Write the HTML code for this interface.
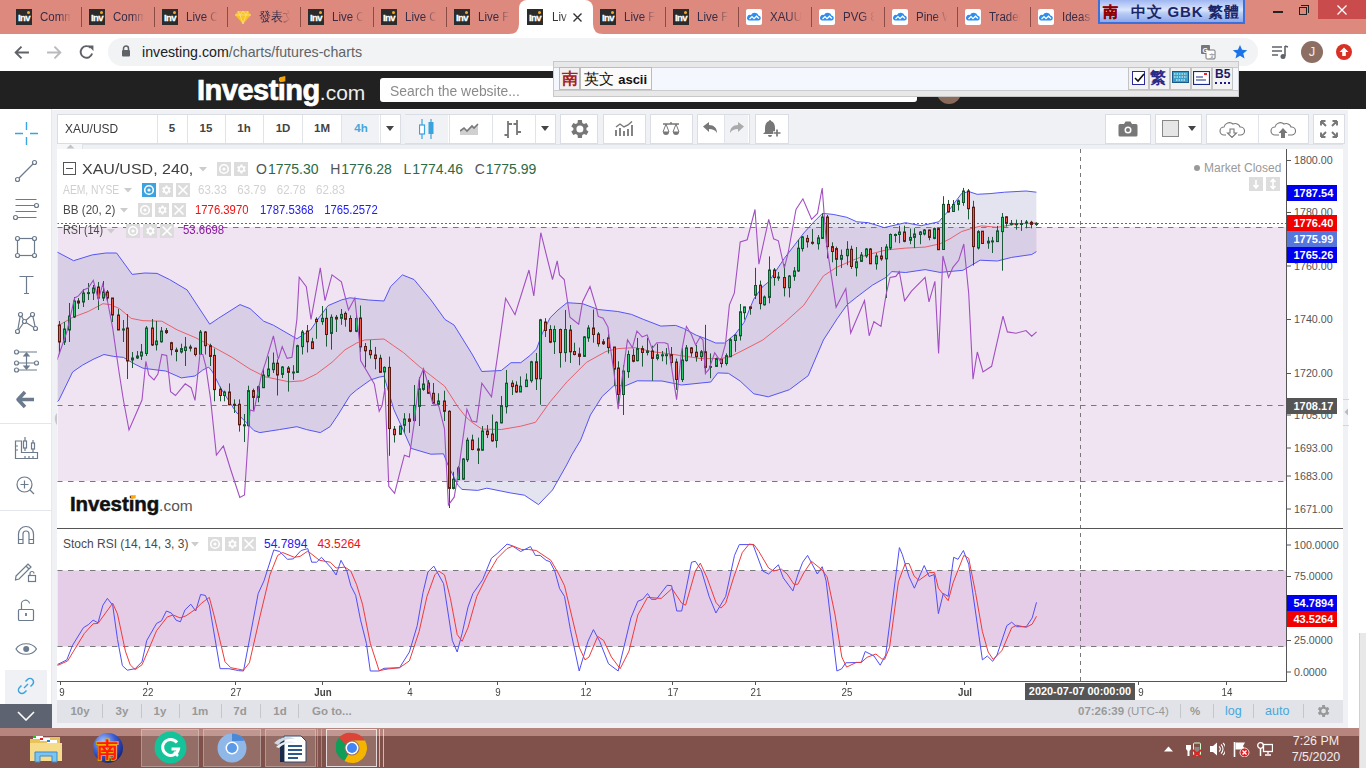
<!DOCTYPE html><html><head><meta charset="utf-8"><style>
*{margin:0;padding:0;box-sizing:border-box}
html,body{width:1366px;height:768px;overflow:hidden;background:#fff;font-family:"Liberation Sans",sans-serif}
.a{position:absolute}
.tabt{position:absolute;top:9px;font-size:12.5px;color:#382c46;white-space:nowrap;overflow:hidden;width:34px;line-height:16px;transform:scaleX(0.92);transform-origin:0 0;
 -webkit-mask-image:linear-gradient(90deg,#000 60%,transparent 100%)}
.fav{position:absolute;top:9px;width:16px;height:16px;background:#2b2b2b;color:#fff;font-weight:bold;font-size:9.5px;line-height:17px;text-align:center;letter-spacing:-0.6px;-webkit-text-stroke:0.3px #fff}
.fav i{position:absolute;right:2px;top:2px;width:3px;height:3px;background:#f5a623;border-radius:2px}
.sep{position:absolute;top:7px;width:1px;height:20px;background:#8a4c44}
.tb{position:absolute;top:114px;height:30px;background:#fff;border:1px solid #dadde3}
.tbd{position:absolute;top:0;width:1px;height:28px;background:#e0e3e8}
.pl{position:absolute;left:1294px;font-size:10.7px;color:#555;line-height:12px}
.tag{position:absolute;left:1287px;width:50px;height:16px;color:#fff;font-weight:bold;font-size:11px;line-height:16px;padding-left:6.5px}
.dl{position:absolute;top:686px;font-size:10.6px;color:#444;line-height:12px;transform:scaleX(0.92)}
.bb{position:absolute;top:704px;font-size:11.5px;color:#999;font-weight:bold;line-height:14px}
.bsep{position:absolute;top:704px;width:1px;height:14px;background:#c4c6cc}
.sb{position:absolute;left:14px;width:24px;height:24px}
</style></head><body><div class="a" style="left:0;top:0;width:1366px;height:34px;background:#dd897d"></div><div class="a" style="left:519px;top:0;width:74px;height:36px;background:#fff;border-radius:8px 8px 0 0"></div><svg class="a" style="left:509px;top:24px" width="94" height="12"><path d="M0 10 Q10 10 10 0 L10 12 L0 12Z M94 10 Q84 10 84 0 L84 12 L94 12Z" fill="#fff"/></svg><div class="fav" style="left:16px">Inv<i></i></div><div class="tabt" style="left:40px">Comm</div><div class="sep" style="left:81px"></div><div class="fav" style="left:89px">Inv<i></i></div><div class="tabt" style="left:113px">Comm</div><div class="sep" style="left:154px"></div><div class="fav" style="left:162px">Inv<i></i></div><div class="tabt" style="left:186px">Live C</div><div class="sep" style="left:227px"></div><svg class="a" style="left:235px;top:9px" width="16" height="16" viewBox="0 0 16 16"><path d="M3 2 L13 2 L16 6 L8 15 L0 6Z" fill="#f7c325"/><path d="M3 2 L5 6 L8 2 L11 6 L13 2 M0 6 L16 6 M5 6 L8 15 L11 6" stroke="#fbe08a" stroke-width="0.8" fill="none"/></svg><div class="tabt" style="left:259px">發表文</div><div class="sep" style="left:300px"></div><div class="fav" style="left:308px">Inv<i></i></div><div class="tabt" style="left:332px">Live C</div><div class="sep" style="left:373px"></div><div class="fav" style="left:381px">Inv<i></i></div><div class="tabt" style="left:405px">Live C</div><div class="sep" style="left:446px"></div><div class="fav" style="left:454px">Inv<i></i></div><div class="tabt" style="left:478px">Live Fu</div><div class="fav" style="left:527px">Inv<i></i></div><div class="tabt" style="left:552px;width:20px;color:#333">Liv</div><svg class="a" style="left:573px;top:13px" width="9" height="9"><path d="M0.5 0.5L8.5 8.5M8.5 0.5L0.5 8.5" stroke="#333" stroke-width="1.4"/></svg><div class="fav" style="left:600px">Inv<i></i></div><div class="tabt" style="left:624px">Live Fu</div><div class="sep" style="left:665px"></div><div class="fav" style="left:673px">Inv<i></i></div><div class="tabt" style="left:697px">Live Fu</div><div class="sep" style="left:738px"></div><svg class="a" style="left:746px;top:9px" width="16" height="16" viewBox="0 0 16 16"><rect width="16" height="16" rx="2" fill="#fff"/><path d="M3 11.5 H13 A2.5 2.5 0 0 0 12.5 6.6 A4 4 0 0 0 5 6 A2.8 2.8 0 0 0 3 11.5Z" fill="#2e8ef0"/><path d="M3.5 10 L6 7.6 L8 9.6 L10.5 7.2 L13 9.4" stroke="#fff" stroke-width="1.3" fill="none"/></svg><div class="tabt" style="left:770px">XAUU</div><div class="sep" style="left:811px"></div><svg class="a" style="left:819px;top:9px" width="16" height="16" viewBox="0 0 16 16"><rect width="16" height="16" rx="2" fill="#fff"/><path d="M3 11.5 H13 A2.5 2.5 0 0 0 12.5 6.6 A4 4 0 0 0 5 6 A2.8 2.8 0 0 0 3 11.5Z" fill="#2e8ef0"/><path d="M3.5 10 L6 7.6 L8 9.6 L10.5 7.2 L13 9.4" stroke="#fff" stroke-width="1.3" fill="none"/></svg><div class="tabt" style="left:843px">PVG 8</div><div class="sep" style="left:884px"></div><svg class="a" style="left:892px;top:9px" width="16" height="16" viewBox="0 0 16 16"><rect width="16" height="16" rx="2" fill="#fff"/><path d="M3 11.5 H13 A2.5 2.5 0 0 0 12.5 6.6 A4 4 0 0 0 5 6 A2.8 2.8 0 0 0 3 11.5Z" fill="#2e8ef0"/><path d="M3.5 10 L6 7.6 L8 9.6 L10.5 7.2 L13 9.4" stroke="#fff" stroke-width="1.3" fill="none"/></svg><div class="tabt" style="left:916px">Pine W</div><div class="sep" style="left:957px"></div><svg class="a" style="left:965px;top:9px" width="16" height="16" viewBox="0 0 16 16"><rect width="16" height="16" rx="2" fill="#fff"/><path d="M3 11.5 H13 A2.5 2.5 0 0 0 12.5 6.6 A4 4 0 0 0 5 6 A2.8 2.8 0 0 0 3 11.5Z" fill="#2e8ef0"/><path d="M3.5 10 L6 7.6 L8 9.6 L10.5 7.2 L13 9.4" stroke="#fff" stroke-width="1.3" fill="none"/></svg><div class="tabt" style="left:989px">Trader</div><div class="sep" style="left:1030px"></div><svg class="a" style="left:1038px;top:9px" width="16" height="16" viewBox="0 0 16 16"><rect width="16" height="16" rx="2" fill="#fff"/><path d="M3 11.5 H13 A2.5 2.5 0 0 0 12.5 6.6 A4 4 0 0 0 5 6 A2.8 2.8 0 0 0 3 11.5Z" fill="#2e8ef0"/><path d="M3.5 10 L6 7.6 L8 9.6 L10.5 7.2 L13 9.4" stroke="#fff" stroke-width="1.3" fill="none"/></svg><div class="tabt" style="left:1062px">Ideas</div><div class="a" style="left:1273px;top:11px;width:10px;height:2px;background:#222"></div><div class="a" style="left:1299px;top:7px;width:8px;height:8px;border:1px solid #222"></div><div class="a" style="left:1301px;top:5px;width:8px;height:8px;border-top:1px solid #222;border-right:1px solid #222"></div><div class="a" style="left:1318px;top:0;width:48px;height:19px;background:#c94b4b"></div><svg class="a" style="left:1337px;top:5px" width="10" height="10"><path d="M0.5 0.5L9.5 9.5M9.5 0.5L0.5 9.5" stroke="#fff" stroke-width="1.3"/></svg><div class="a" style="left:1098px;top:0;width:147px;height:24px;background:linear-gradient(#9fb6f2,#dce6fc 45%,#b9ccf5 60%,#8ea8ec);border:2px solid #3d6fd8;border-top:0"></div><div class="a" style="left:1103px;top:2px;font-size:15px;font-weight:bold;color:#e01010;line-height:20px;-webkit-text-stroke:0.3px #800">南</div><div class="a" style="left:1131px;top:2px;font-size:15px;font-weight:bold;color:#1a2668;line-height:19px;letter-spacing:0.8px;white-space:nowrap">中文 GBK 繁體</div><div class="a" style="left:0;top:34px;width:1366px;height:37px;background:#fff"></div><svg class="a" style="left:13px;top:44px" width="17" height="17" viewBox="0 0 16 16"><path d="M15 8H2.5M8 2.5L2.5 8L8 13.5" stroke="#5f6368" stroke-width="1.8" fill="none"/></svg><svg class="a" style="left:46px;top:44px" width="17" height="17" viewBox="0 0 16 16"><path d="M1 8H13.5M8 2.5L13.5 8L8 13.5" stroke="#b8babd" stroke-width="1.8" fill="none"/></svg><svg class="a" style="left:78px;top:44px" width="17" height="17" viewBox="0 0 16 16"><path d="M13.3 9A5.5 5.5 0 1 1 11.9 3.6" stroke="#5f6368" stroke-width="1.8" fill="none"/><path d="M9.5 1.5H14.5V6.5Z" fill="#5f6368"/></svg><div class="a" style="left:108px;top:38px;width:1150px;height:28px;background:#f1f3f4;border-radius:14px"></div><svg class="a" style="left:121px;top:45px" width="10" height="12" viewBox="0 0 10 12"><path d="M2.5 5V3.5A2.5 2.5 0 0 1 7.5 3.5V5" stroke="#5f6368" stroke-width="1.5" fill="none"/><rect x="1" y="5" width="8" height="6.5" rx="1" fill="#5f6368"/></svg><div class="a" style="left:142px;top:44px;font-size:14.2px;line-height:17px;color:#5f6368;white-space:nowrap"><span style="color:#202124">investing.com</span>/charts/futures-charts</div><svg class="a" style="left:1200px;top:44px" width="16" height="16" viewBox="0 0 16 16"><rect x="1" y="1" width="9" height="9" rx="1" fill="#777"/><rect x="6" y="6" width="9" height="9" rx="1" fill="#fff" stroke="#777"/><text x="2.5" y="8.5" font-size="7" fill="#fff" font-weight="bold" font-family="Liberation Sans">G</text><text x="8.5" y="13.5" font-size="6" fill="#777" font-family="Liberation Sans">文</text></svg><svg class="a" style="left:1232px;top:44px" width="16" height="16" viewBox="0 0 24 24"><path d="M12 1.5l3.1 7.2 7.7.6-5.9 5 1.9 7.6L12 17.8l-6.8 4.1 1.9-7.6-5.9-5 7.7-.6z" fill="#1a73e8"/></svg><svg class="a" style="left:1271px;top:44px" width="18" height="16" viewBox="0 0 18 16"><path d="M1 3H11M1 7H11M1 11H7" stroke="#5f6368" stroke-width="1.6"/><path d="M14 2V12" stroke="#5f6368" stroke-width="1.6"/><circle cx="12" cy="12.5" r="2.5" fill="#5f6368"/><path d="M14 2L17 3" stroke="#5f6368" stroke-width="1.6"/></svg><div class="a" style="left:1301px;top:41px;width:22px;height:22px;border-radius:11px;background:#8d6e63;color:#f5e9e6;font-size:13px;line-height:22px;text-align:center">J</div><svg class="a" style="left:1336px;top:44px" width="16" height="16" viewBox="0 0 16 16"><circle cx="8" cy="8" r="8" fill="#d93025"/><path d="M8 3.5L12.5 8H9.8V12H6.2V8H3.5Z" fill="#fff"/></svg><div class="a" style="left:0;top:71px;width:1366px;height:38px;background:#212121"></div><div class="a" style="left:380px;top:78px;width:537px;height:24px;background:#fff;border-radius:3px"></div><div class="a" style="left:390px;top:82px;font-size:15px;color:#8a8a8a;line-height:17px;transform:scaleX(0.927);transform-origin:0 0;white-space:nowrap">Search the website...</div><div class="a" style="left:937px;top:80px;width:24px;height:24px;border-radius:12px;background:#8a6a5a"></div><div class="a" style="left:197px;top:73px;font-size:29px;font-weight:bold;color:#fff;line-height:34px;letter-spacing:-0.5px;white-space:nowrap;-webkit-text-stroke:0.7px #fff">Investing<span style="font-weight:normal;font-size:21px;letter-spacing:0;-webkit-text-stroke:0;color:#eee">.com</span></div><div class="a" style="left:553px;top:61px;width:686px;height:36px;background:#e8e8e8;border:1px solid #c8c8c8"></div><div class="a" style="left:554px;top:67px;width:684px;height:24px;background:#f4f8fe;border-top:1px solid #ccc;border-bottom:1px solid #ccc"></div><div class="a" style="left:559px;top:67px;width:21px;height:23px;background:#f0f0f0;border:1px solid #bbb;color:#a82020;font-weight:bold;font-size:16px;line-height:21px;text-align:center">南</div><div class="a" style="left:580px;top:67px;width:72px;height:23px;background:#fafafa;border:1px solid #bbb;color:#111;font-size:15px;line-height:21px;padding-left:3px;white-space:nowrap">英文 <b style="font-size:13px">ascii</b></div><div class="a" style="left:1128px;top:67px;width:21px;height:23px;background:#f2f2f2;border:1px solid #c4c4c4"></div><div class="a" style="left:1149px;top:67px;width:21px;height:23px;background:#f2f2f2;border:1px solid #c4c4c4"></div><div class="a" style="left:1170px;top:67px;width:21px;height:23px;background:#f2f2f2;border:1px solid #c4c4c4"></div><div class="a" style="left:1191px;top:67px;width:21px;height:23px;background:#f2f2f2;border:1px solid #c4c4c4"></div><div class="a" style="left:1212px;top:67px;width:21px;height:23px;background:#f2f2f2;border:1px solid #c4c4c4"></div><div class="a" style="left:1132px;top:71px;width:13px;height:14px;border:1px solid #2a2a9a;background:#fff"></div><svg class="a" style="left:1133px;top:72px" width="12" height="12"><path d="M2 6L5 9L11 2" stroke="#111" stroke-width="1.6" fill="none"/></svg><div class="a" style="left:1150px;top:68px;font-size:16px;font-weight:bold;color:#2a2a8a;line-height:20px">繁</div><svg class="a" style="left:1172px;top:71px" width="17" height="12"><rect x="0.5" y="0.5" width="16" height="11" fill="#3aa0c8" stroke="#1a5a8a"/><path d="M2 3H15M2 6H15M4 9H13" stroke="#fff" stroke-width="1" stroke-dasharray="1.5 1"/></svg><svg class="a" style="left:1193px;top:71px" width="17" height="14"><rect x="0.5" y="0.5" width="16" height="13" fill="#fff" stroke="#1a2a8a" stroke-width="1.2"/><rect x="11" y="2" width="3" height="2" fill="#e22"/><path d="M3 6H10M3 9H13" stroke="#1a2a8a" stroke-width="1.2"/></svg><div class="a" style="left:1215px;top:68px;font-size:12px;font-weight:bold;color:#1a1a6a;line-height:13px">B5</div><div class="a" style="left:1215px;top:82px;width:15px;height:3px;border-top:2px dotted #1a1a8a"></div><div class="a" style="left:0;top:109px;width:1366px;height:619px;background:#fff"></div><div class="a" style="left:52px;top:110px;width:1296px;height:618px;background:#eff1f5"></div><div class="tb" style="left:57px;width:344px"><div class="a" style="left:283px;top:0;width:38px;height:28px;background:#f1f2f5"></div><div class="tbd" style="left:99px"></div><div class="tbd" style="left:129px"></div><div class="tbd" style="left:167px"></div><div class="tbd" style="left:205px"></div><div class="tbd" style="left:244px"></div><div class="tbd" style="left:283px"></div><div class="tbd" style="left:322px"></div></div><div class="tb" style="left:405px;width:151px"><div class="a" style="left:-1px;top:0;width:43px;height:28px;background:#f1f2f5"></div><div class="tbd" style="left:43px"></div><div class="tbd" style="left:86px"></div><div class="tbd" style="left:129px"></div></div><div class="tb" style="left:560px;width:38px"></div><div class="tb" style="left:603px;width:43px"></div><div class="tb" style="left:650px;width:43px"></div><div class="tb" style="left:697px;width:53px"><div class="a" style="left:26px;top:0;width:24px;height:28px;background:#f1f2f5"></div><div class="tbd" style="left:26px"></div></div><div class="tb" style="left:755px;width:34px"></div><div class="tb" style="left:1105px;width:46px"></div><div class="tb" style="left:1155px;width:47px"></div><div class="tb" style="left:1206px;width:103px"><div class="tbd" style="left:51px"></div></div><div class="tb" style="left:1313px;width:32px"></div><div class="a" style="left:65px;top:121px;font-size:13px;color:#3a3a3a;line-height:15px;transform:scaleX(0.92);transform-origin:0 0">XAU/USD</div><div class="a" style="left:152px;width:40px;top:121px;text-align:center;font-size:11.5px;font-weight:bold;color:#444;line-height:14px">5</div><div class="a" style="left:186px;width:40px;top:121px;text-align:center;font-size:11.5px;font-weight:bold;color:#444;line-height:14px">15</div><div class="a" style="left:224px;width:40px;top:121px;text-align:center;font-size:11.5px;font-weight:bold;color:#444;line-height:14px">1h</div><div class="a" style="left:263px;width:40px;top:121px;text-align:center;font-size:11.5px;font-weight:bold;color:#444;line-height:14px">1D</div><div class="a" style="left:302px;width:40px;top:121px;text-align:center;font-size:11.5px;font-weight:bold;color:#444;line-height:14px">1M</div><div class="a" style="left:341px;width:40px;top:121px;text-align:center;font-size:11.5px;font-weight:bold;color:#45a7dc;line-height:14px">4h</div><svg class="a" style="left:386px;top:126px" width="8" height="5"><path d="M0 0H8L4 5Z" fill="#444"/></svg><svg class="a" style="left:541px;top:126px" width="8" height="5"><path d="M0 0H8L4 5Z" fill="#444"/></svg><svg class="a" style="left:1188px;top:126px" width="8" height="5"><path d="M0 0H8L4 5Z" fill="#444"/></svg><svg class="a" style="left:419px;top:119px" width="16" height="20"><path d="M3 0V20M12 0V20" stroke="#3aa2dc" stroke-width="1.2"/><rect x="0.5" y="6" width="5" height="9" fill="#fff" stroke="#3aa2dc" stroke-width="1.2"/><rect x="9.5" y="3" width="5" height="12" fill="#3aa2dc"/></svg><svg class="a" style="left:460px;top:123px" width="20" height="12"><path d="M0 12V8L4 5L7 8L12 3L14 5L18 1V12Z" fill="#d0d0d0"/><path d="M0 8L4 5L7 8L12 3L14 5L18 1" stroke="#777" stroke-width="1.6" fill="none"/></svg><svg class="a" style="left:504px;top:119px" width="18" height="20"><path d="M4 2V19M13 1V16M0.5 16H4M4 5H8M9.5 5H13M13 13H17" stroke="#777" stroke-width="1.8" fill="none"/></svg><svg class="a" style="left:567px;top:117px" width="24" height="24" viewBox="0 0 24 24"><path fill="#777" d="M19.4 13a7.5 7.5 0 0 0 0-2l2.1-1.6-2-3.5-2.5 1a7.4 7.4 0 0 0-1.7-1L14.9 3h-4l-.4 2.9a7.4 7.4 0 0 0-1.7 1l-2.5-1-2 3.5L6.4 11a7.5 7.5 0 0 0 0 2l-2.1 1.6 2 3.5 2.5-1a7.4 7.4 0 0 0 1.7 1l.4 2.9h4l.4-2.9a7.4 7.4 0 0 0 1.7-1l2.5 1 2-3.5zM12.9 15.5a3.5 3.5 0 1 1 0-7 3.5 3.5 0 0 1 0 7z"/></svg><svg class="a" style="left:615px;top:121px" width="18" height="16"><path d="M1 15V9M5 15V7M9 15V10M13 15V8M17 15V4" stroke="#777" stroke-width="1.8"/><path d="M1 6L5 3L9 6L13 4L17 0.5" stroke="#777" stroke-width="1.4" fill="none"/></svg><svg class="a" style="left:662px;top:121px" width="18" height="16"><path d="M1 3H17M9 1V3" stroke="#777" stroke-width="1.4"/><path d="M4 3L1 11H7ZM14 3L11 11H17Z" stroke="#777" stroke-width="1" fill="none"/><path d="M1 11A3 3 0 0 0 7 11ZM11 11A3 3 0 0 0 17 11Z" fill="#777"/></svg><svg class="a" style="left:703px;top:122px" width="15" height="12" viewBox="0 0 15 12"><path d="M0 4.5L6 0V3C11 3 14 6 14 11C12 8 10 7 6 7V10Z" fill="#777"/></svg><svg class="a" style="left:729px;top:122px" width="15" height="12" viewBox="0 0 15 12"><path d="M15 4.5L9 0V3C4 3 1 6 1 11C3 8 5 7 9 7V10Z" fill="#aaa"/></svg><svg class="a" style="left:762px;top:120px" width="20" height="18"><path d="M7 1A1 1 0 0 1 9 1C12 2 13 5 13 8V12L15 14H1L3 12V8C3 5 4 2 7 1Z" fill="#777"/><path d="M6 15A2 2 0 0 0 10 15Z" fill="#777"/><path d="M11 13H19M15 9V17" stroke="#fff" stroke-width="3.5"/><path d="M11.5 13H18.5M15 9.5V16.5" stroke="#777" stroke-width="1.7"/></svg><svg class="a" style="left:1118px;top:121px" width="20" height="16"><path d="M2 3H6L7.5 0.5H12.5L14 3H18A1.5 1.5 0 0 1 19.5 4.5V14A1.5 1.5 0 0 1 18 15.5H2A1.5 1.5 0 0 1 0.5 14V4.5A1.5 1.5 0 0 1 2 3Z" fill="#777"/><circle cx="10" cy="9" r="3.5" fill="#fff"/><circle cx="10" cy="9" r="2" fill="#777"/></svg><div class="a" style="left:1162px;top:120px;width:17px;height:17px;background:#e6e6e6;border:1px solid #888"></div><svg class="a" style="left:1219px;top:121px" width="27" height="17" viewBox="0 0 27 17"><path d="M7 14H5A4 4 0 0 1 5 6A5.5 5.5 0 0 1 14 3A5 5 0 0 1 21 6A4 4 0 0 1 22 14H19" stroke="#777" stroke-width="1.1" fill="none"/><path d="M11 8H15V12H17.5L13 16.5L8.5 12H11Z" stroke="#777" stroke-width="1.1" fill="#fff"/></svg><svg class="a" style="left:1270px;top:121px" width="27" height="17" viewBox="0 0 27 17"><path d="M9 14H5A4 4 0 0 1 5 6A5.5 5.5 0 0 1 14 3A5 5 0 0 1 21 6A4 4 0 0 1 22 14H18" stroke="#777" stroke-width="1.1" fill="none"/><path d="M11 17V12H8.5L13 7L17.5 12H15V17Z" fill="#777"/></svg><svg class="a" style="left:1320px;top:120px" width="18" height="18"><path d="M1 1L6 6M1 1V5.5M1 1H5.5M17 1L12 6M17 1V5.5M17 1H12.5M1 17L6 12M1 17V12.5M1 17H5.5M17 17L12 12M17 17V12.5M17 17H12.5" stroke="#777" stroke-width="1.9" fill="none"/></svg><div class="a" style="left:57px;top:144px;width:1286px;height:5px;background:#eef0f4;border-top:1px solid #dfe2e7"></div><div class="a" style="left:57px;top:144px;width:26px;height:5px;background:#f6f7f9;border-right:1px solid #dfe2e7"></div><div class="a" style="left:57px;top:149px;width:1286px;height:551px;background:#fff"></div><div class="a" style="left:57px;top:700px;width:1286px;height:23px;background:#e1e3e8"></div><div class="bb" style="left:60px;width:40px;text-align:center">10y</div><div class="bb" style="left:102px;width:40px;text-align:center">3y</div><div class="bb" style="left:140px;width:40px;text-align:center">1y</div><div class="bb" style="left:180px;width:40px;text-align:center">1m</div><div class="bb" style="left:220px;width:40px;text-align:center">7d</div><div class="bb" style="left:260px;width:40px;text-align:center">1d</div><div class="bb" style="left:312px">Go to...</div><div class="bsep" style="left:102px"></div><div class="bsep" style="left:141px"></div><div class="bsep" style="left:179px"></div><div class="bsep" style="left:221px"></div><div class="bsep" style="left:260px"></div><div class="bsep" style="left:298px"></div><div class="bsep" style="left:1180px"></div><div class="bsep" style="left:1213px"></div><div class="bsep" style="left:1253px"></div><div class="bsep" style="left:1303px"></div><div class="bb" style="left:1078px;font-weight:bold;color:#999">07:26:39 <span style="font-weight:normal">(UTC-4)</span></div><div class="bb" style="left:1190px">%</div><div class="bb" style="left:1225px;color:#45a7dc;font-weight:normal;font-size:12.5px">log</div><div class="bb" style="left:1265px;color:#45a7dc;font-weight:normal;font-size:12.5px">auto</div><svg class="a" style="left:1315px;top:703px" width="16" height="16" viewBox="0 0 24 24"><path fill="#999" d="M19.4 13a7.5 7.5 0 0 0 0-2l2.1-1.6-2-3.5-2.5 1a7.4 7.4 0 0 0-1.7-1L14.9 3h-4l-.4 2.9a7.4 7.4 0 0 0-1.7 1l-2.5-1-2 3.5L6.4 11a7.5 7.5 0 0 0 0 2l-2.1 1.6 2 3.5 2.5-1a7.4 7.4 0 0 0 1.7 1l.4 2.9h4l.4-2.9a7.4 7.4 0 0 0 1.7-1l2.5 1 2-3.5zM12.9 15.5a3.5 3.5 0 1 1 0-7 3.5 3.5 0 0 1 0 7z"/></svg><div class="a" style="left:0;top:109px;width:52px;height:619px;background:#fff;border-right:1px solid #e6e8ec"></div><svg class="a" style="left:0;top:109px" width="52" height="619" viewBox="0 109 52 619" fill="none" stroke="#6b7a8c" stroke-width="1.2"><path d="M26.5 122V130M26.5 137V145M15 133.5H23M30 133.5H38" stroke="#3ba3e0" stroke-width="1.4"/><path d="M19 178L33 164"/><circle cx="17.5" cy="179.5" r="2" fill="#fff"/><circle cx="34.5" cy="162.5" r="2" fill="#fff"/><path d="M15.5 199.5H36.5M15.5 205.5H34.5M15.5 211.5H36.5M17.5 217.5H36.5"/><circle cx="36.5" cy="205.5" r="2" fill="#fff"/><circle cx="15.5" cy="217.5" r="2" fill="#fff"/><rect x="17.5" y="238.5" width="17" height="17"/><circle cx="17.5" cy="238.5" r="2" fill="#fff"/><circle cx="17.5" cy="255.5" r="2" fill="#fff"/><circle cx="34.5" cy="238.5" r="2" fill="#fff"/><circle cx="34.5" cy="255.5" r="2" fill="#fff"/><path d="M19.5 276.5H33.5M26.5 276.5V293.5M24 293.5H29"/><path d="M17.5 331.5L20.5 314.5L24.5 321.5L32.5 314.5L35.5 328.5L24.5 321.5L17.5 331.5"/><circle cx="17.5" cy="331.5" r="2" fill="#fff"/><circle cx="20.5" cy="314.5" r="2" fill="#fff"/><circle cx="24.5" cy="321.5" r="2" fill="#fff"/><circle cx="32.5" cy="314.5" r="2" fill="#fff"/><circle cx="35.5" cy="328.5" r="2" fill="#fff"/><path d="M16.5 352H37M16.5 363H36.5M16.5 370H37M26.5 354V368"/><path d="M24 356L26.5 353L29 356ZM24 366L26.5 369L29 366Z" fill="#6b7a8c"/><circle cx="16.5" cy="352" r="2" fill="#fff"/><circle cx="16.5" cy="363" r="2" fill="#fff"/><circle cx="36.5" cy="363" r="2" fill="#fff"/><circle cx="16.5" cy="370" r="2" fill="#fff"/><path d="M25 392L18 399.5L25 407M18.5 399.5H34" stroke-width="3.5" stroke-linejoin="round"/><path d="M0 423.5H52M0 510.5H52" stroke="#e3e6ea" stroke-width="1"/><path d="M15.5 441V458.5H37.5V452.5H21.5V441ZM15.5 446H18M15.5 450H18M25 458.5V456M29 458.5V456M33 458.5V456"/><rect x="23.5" y="441" width="3" height="7"/><rect x="31.5" y="443" width="3" height="6"/><path d="M25 437V441M25 448V451M33 440V443M33 449V452"/><circle cx="24.5" cy="484.5" r="7.5"/><path d="M30 490L34 494M24.5 480.5V488.5M20.5 484.5H28.5"/><path d="M18.5 543.5V534A7.5 7.5 0 0 1 33.5 534V543.5H29V534A3 3 0 0 0 23 534V543.5ZM18.5 539.5H23M29 539.5H33.5"/><path d="M16 576L28 564L31 567L19 579L15.5 580Z M26 566L29 569"/><rect x="28.5" y="575.5" width="7" height="6"/><path d="M30 575.5V573.5A2 2 0 0 1 34 573.5"/><rect x="18.5" y="609.5" width="15" height="11" rx="1"/><path d="M21.5 609.5V605A4 4 0 0 1 29.5 603.5"/><path d="M26 613V616" stroke-width="1.8"/><path d="M16 649C20 642 32 642 36.5 649C32 656 20 656 16 649Z"/><circle cx="26.2" cy="649" r="3" fill="#6b7a8c" stroke="none"/></svg><div class="a" style="left:5px;top:670px;width:42px;height:34px;background:#f0f1f4"></div><svg class="a" style="left:16px;top:676px" width="20" height="20" viewBox="0 0 20 20" fill="none" stroke="#3ba3e0" stroke-width="1.5"><path d="M8 12L12 8"/><path d="M9.5 5.5L11.5 3.5A3 3 0 0 1 16.5 8.5L14.5 10.5"/><path d="M10.5 14.5L8.5 16.5A3 3 0 0 1 3.5 11.5L5.5 9.5"/></svg><div class="a" style="left:0;top:704px;width:52px;height:24px;background:#5d6371"></div><svg class="a" style="left:17px;top:711px" width="18" height="10"><path d="M1 1L9 9L17 1" stroke="#fff" stroke-width="1.6" fill="none"/></svg><div class="a" style="left:0;top:728px;width:1366px;height:40px;background:#80514a"></div><div class="a" style="left:0;top:728px;width:1366px;height:8px;background:#b6857d"></div><div class="a" style="left:1359px;top:633px;width:7px;height:135px;background:#e8e8e8;border-left:1px solid #d0d0d0"></div><div class="a" style="left:141px;top:729px;width:58px;height:38px;background:rgba(255,255,255,0.16);border:1px solid rgba(255,255,255,0.28)"></div><div class="a" style="left:203px;top:729px;width:58px;height:38px;background:rgba(255,255,255,0.16);border:1px solid rgba(255,255,255,0.28)"></div><div class="a" style="left:265px;top:729px;width:51px;height:38px;background:rgba(255,255,255,0.16);border:1px solid rgba(255,255,255,0.28)"></div><div class="a" style="left:326px;top:729px;width:51px;height:38px;background:rgba(255,255,255,0.16);border:1px solid rgba(255,255,255,0.75)"></div><div class="a" style="left:317px;top:729px;width:2px;height:38px;border-left:1px solid rgba(255,255,255,0.3)"></div><div class="a" style="left:321px;top:729px;width:2px;height:38px;border-left:1px solid rgba(255,255,255,0.3)"></div><div class="a" style="left:379px;top:729px;width:2px;height:38px;border-left:1px solid rgba(255,255,255,0.6)"></div><div class="a" style="left:383px;top:729px;width:2px;height:38px;border-left:1px solid rgba(255,255,255,0.6)"></div><svg class="a" style="left:29px;top:735px" width="34" height="28" viewBox="0 0 34 28"><path d="M1 4H12L14 2H31V24H1Z" fill="#e8c35a"/><rect x="4" y="1" width="10" height="3" fill="#fff"/><rect x="4" y="1" width="3" height="2" fill="#1c1"/><rect x="11" y="3" width="10" height="3" fill="#fff"/><rect x="11" y="3" width="3" height="2" fill="#d22"/><rect x="18" y="5" width="10" height="3" fill="#fff"/><rect x="18" y="5" width="3" height="2" fill="#28d"/><path d="M1 8H33V26H1Z" fill="#f6dc8a"/><path d="M6 17H28V27H23V21H11V27H6Z" fill="#7cc4f0" stroke="#3a8ad0" stroke-width="1"/></svg><svg class="a" style="left:92px;top:732px" width="32" height="32" viewBox="0 0 32 32"><defs><radialGradient id="gl" cx="0.35" cy="0.3" r="0.8"><stop offset="0" stop-color="#a8c8ff"/><stop offset="0.5" stop-color="#3a5ad0"/><stop offset="1" stop-color="#0a1a70"/></radialGradient></defs><circle cx="16" cy="16" r="15" fill="url(#gl)"/><text x="5" y="25" font-size="21" font-weight="bold" fill="#ff1a0a" stroke="#f0b000" stroke-width="1.6" paint-order="stroke">南</text></svg><svg class="a" style="left:154px;top:731px" width="33" height="33" viewBox="0 0 33 33"><circle cx="16.5" cy="16.5" r="16" fill="#15c39a"/><path d="M23 11.5A8 8 0 1 0 24.5 18H17.5" stroke="#fff" stroke-width="3" fill="none"/><path d="M20 21L24 25" stroke="#fff" stroke-width="2.5"/></svg><svg class="a" style="left:217px;top:733px" width="30" height="30" viewBox="0 0 30 30"><circle cx="15" cy="15" r="14.5" fill="#8fb8e8"/><path d="M15 0.5A14.5 14.5 0 0 1 27.6 7.8L15 8Z" fill="#4a88d8"/><circle cx="15" cy="15" r="6.5" fill="#fff"/><circle cx="15" cy="15" r="5" fill="#5a9ae6"/></svg><svg class="a" style="left:274px;top:733px" width="33" height="30" viewBox="0 0 33 30"><path d="M10 3H27L32 8V29H10Z" fill="#fff" stroke="#2a4a6a" stroke-width="1"/><path d="M6 5H10V29H6Z" fill="#1a2a4a"/><path d="M14 13H28M14 17H28M14 21H28M14 25H24" stroke="#2a5a8a" stroke-width="2"/><path d="M0 10C6 4 14 2 22 6C14 5 8 7 4 12Z" fill="#cfd8e0"/><path d="M2 14C8 8 16 7 22 10C14 9 9 11 5 15Z" fill="#e8eef2"/></svg><svg class="a" style="left:336px;top:732px" width="32" height="32" viewBox="0 0 32 32"><path d="M16 1A15 15 0 0 1 29 8.5H16A7.5 7.5 0 0 0 9.5 12.2L3 5.5A15 15 0 0 1 16 1Z" fill="#db4437"/><path d="M3 5.5L9.5 12.2A7.5 7.5 0 0 0 12.2 22.5L8.5 29A15 15 0 0 1 3 5.5Z" fill="#0f9d58"/><path d="M29 8.5A15 15 0 0 1 8.5 29L12.2 22.5A7.5 7.5 0 0 0 23.5 16 7.5 7.5 0 0 0 16 8.5Z" fill="#f4b400"/><path d="M3 5.5 A15 15 0 0 0 8.5 29" fill="none"/><circle cx="16" cy="16" r="6.5" fill="#fff"/><circle cx="16" cy="16" r="5" fill="#4285f4"/></svg><svg class="a" style="left:1164px;top:746px" width="9" height="6"><path d="M0 5.5L4.5 0.5L9 5.5Z" fill="#fff"/></svg><svg class="a" style="left:1185px;top:741px" width="17" height="16" viewBox="0 0 17 16"><path d="M2 1V4M5 1V4M1 4H6V8L4.5 10V15H2.5V10L1 8Z" fill="#fff"/><rect x="8.5" y="2" width="7" height="12" rx="1" fill="none" stroke="#cfc" stroke-width="1"/><rect x="9.5" y="6" width="5" height="7" fill="#888"/><path d="M8 9L16 16M16 9L8 16" stroke="#e02020" stroke-width="1.8"/></svg><svg class="a" style="left:1209px;top:742px" width="16" height="14" viewBox="0 0 16 14"><path d="M1 4H4L8 0.5V13.5L4 10H1Z" fill="#fff"/><path d="M10 4.5A3 3 0 0 1 10 9.5M12 2.5A6 6 0 0 1 12 11.5M14 1A8 8 0 0 1 14 13" stroke="#fff" stroke-width="1.1" fill="none"/></svg><svg class="a" style="left:1233px;top:741px" width="17" height="16" viewBox="0 0 17 16"><path d="M1.5 1V16" stroke="#fff" stroke-width="1.6"/><path d="M2.5 1.5H12L10 5L12 8.5H2.5Z" fill="#fff"/><circle cx="11.5" cy="11.5" r="4.5" fill="#e02020" stroke="#fff" stroke-width="0.8"/><path d="M9.5 9.5L13.5 13.5M13.5 9.5L9.5 13.5" stroke="#fff" stroke-width="1.3"/></svg><svg class="a" style="left:1257px;top:742px" width="16" height="15" viewBox="0 0 16 15"><circle cx="3.5" cy="3.5" r="2.8" fill="none" stroke="#fff" stroke-width="1.3"/><path d="M3.5 6.5V14" stroke="#fff" stroke-width="1.5"/><rect x="6.5" y="2.5" width="9" height="7" fill="none" stroke="#fff" stroke-width="1.3"/><path d="M11 9.5V12M8 13H14" stroke="#fff" stroke-width="1.3"/></svg><div class="a" style="left:1288px;top:733px;width:56px;text-align:center;font-size:12.5px;line-height:16px;color:#f3ecea">7:26 PM<br>7/5/2020</div><svg class="a" style="left:0;top:0" width="1366" height="768" viewBox="0 0 1366 768"><defs><clipPath id="cm"><rect x="57.5" y="149" width="1229" height="379"/></clipPath><clipPath id="cs"><rect x="57.5" y="529" width="1229" height="152"/></clipPath></defs><g clip-path="url(#cm)"><rect x="57" y="227" width="1230" height="254" fill="#f0e4f2"/><polygon points="57.0,252.0 59.0,253.0 73.6,260.7 92.2,254.9 105.8,253.0 116.6,253.0 132.2,274.4 144.9,273.0 157.0,273.4 169.5,279.5 187.2,290.0 209.7,324.2 218.4,318.3 240.0,304.6 250.0,308.6 263.7,321.2 273.4,325.2 296.9,338.8 310.5,330.0 319.3,317.3 328.1,305.6 341.8,299.8 350.0,297.8 368.4,300.0 384.0,301.0 390.6,286.6 402.4,274.9 414.0,279.5 431.0,300.0 445.0,319.5 454.0,325.0 472.0,354.0 481.8,371.5 501.3,370.5 511.0,362.7 520.8,362.7 530.6,355.0 536.5,349.0 542.3,333.4 550.1,317.8 558.0,310.0 567.0,302.7 582.6,303.7 598.2,309.5 617.8,311.5 631.5,314.4 643.2,319.3 660.8,326.1 675.7,325.4 683.5,328.4 696.2,335.2 704.0,338.0 715.7,343.0 724.5,343.0 735.2,334.2 744.0,322.5 753.8,299.0 762.0,287.3 768.7,281.8 784.3,258.4 803.8,233.0 813.6,222.2 822.4,213.4 833.1,214.4 846.8,217.3 856.8,221.8 868.5,222.7 884.1,227.6 905.6,222.7 921.2,225.7 938.8,221.8 944.7,214.9 948.6,210.8 961.5,193.6 968.6,191.5 977.2,194.3 990.1,193.6 1004.5,192.2 1026.0,191.0 1036.4,192.2 1036.4,251.6 1031.7,254.5 1011.6,257.4 997.3,261.0 980.1,260.2 962.9,270.3 940.0,272.4 925.1,269.6 905.6,272.5 891.9,271.6 886.0,277.4 872.4,285.2 856.8,297.0 847.0,304.8 837.0,318.9 823.4,340.0 808.2,375.7 789.4,389.7 768.3,396.8 753.8,393.8 740.1,381.0 728.4,373.3 717.7,372.9 710.8,382.0 681.5,385.0 662.0,381.0 637.3,380.8 625.6,385.7 613.9,385.7 602.2,396.4 590.4,415.0 580.7,440.0 572.0,454.5 566.6,465.0 552.5,490.0 538.5,504.6 524.4,495.2 510.3,492.9 486.9,488.2 477.7,490.4 462.0,489.4 458.1,485.5 448.4,466.0 443.5,453.8 430.8,454.2 411.2,448.4 403.6,430.9 393.8,409.4 384.0,376.2 379.2,377.1 370.4,380.0 356.7,389.8 350.0,395.5 337.9,415.0 330.0,426.7 320.3,432.6 306.6,429.6 296.9,426.7 279.3,429.6 259.8,432.6 254.0,430.6 236.0,412.0 220.4,387.7 212.6,372.0 208.7,367.1 202.8,370.0 195.0,376.0 181.3,377.9 165.7,371.0 157.0,370.0 143.0,368.2 135.1,364.3 123.4,357.4 113.6,356.4 104.0,354.5 93.1,359.4 82.4,365.2 72.6,372.0 59.0,400.0 57.0,402.0" fill="rgb(120,120,180)" fill-opacity="0.2"/><path d="M57 227.5H1287M57 481.5H1287M57 405.5H1287" stroke="#787878" stroke-width="1" stroke-dasharray="5.5 5.5"/><path d="M57 223.5H1287" stroke="#2d6bf0" stroke-width="1" stroke-dasharray="2 2"/><polyline points="57.0,326.0 59.0,325.2 72.6,317.4 88.2,311.5 102.9,303.7 110.7,304.7 119.5,308.6 131.2,318.4 143.0,320.7 161.8,321.2 177.4,330.0 196.0,337.9 212.6,346.6 232.1,357.4 250.0,369.1 265.6,376.9 289.0,381.8 302.7,380.8 316.4,374.0 332.0,362.3 345.0,349.8 356.7,343.0 364.5,340.0 384.0,339.0 393.8,345.9 403.6,352.7 419.2,366.4 436.6,380.0 444.5,386.0 458.0,407.0 466.0,417.0 472.0,422.3 481.8,429.1 501.3,429.5 520.8,426.2 535.5,422.3 550.1,401.8 567.0,381.8 586.5,362.3 606.0,351.5 617.8,348.6 635.4,347.6 651.0,351.5 667.0,353.5 681.5,355.7 701.0,358.6 720.6,358.6 730.4,356.7 744.0,349.8 762.8,340.0 784.3,322.8 803.8,305.2 823.4,275.9 837.0,267.1 855.0,259.3 866.5,255.0 886.0,250.0 905.6,248.1 925.1,247.1 940.0,243.8 950.0,238.8 961.5,231.6 973.0,228.0 981.5,225.9 997.3,227.3 1018.8,223.7 1036.4,223.0" fill="none" stroke="#e8606a" stroke-width="1"/><polyline points="57.0,252.0 59.0,253.0 73.6,260.7 92.2,254.9 105.8,253.0 116.6,253.0 132.2,274.4 144.9,273.0 157.0,273.4 169.5,279.5 187.2,290.0 209.7,324.2 218.4,318.3 240.0,304.6 250.0,308.6 263.7,321.2 273.4,325.2 296.9,338.8 310.5,330.0 319.3,317.3 328.1,305.6 341.8,299.8 350.0,297.8 368.4,300.0 384.0,301.0 390.6,286.6 402.4,274.9 414.0,279.5 431.0,300.0 445.0,319.5 454.0,325.0 472.0,354.0 481.8,371.5 501.3,370.5 511.0,362.7 520.8,362.7 530.6,355.0 536.5,349.0 542.3,333.4 550.1,317.8 558.0,310.0 567.0,302.7 582.6,303.7 598.2,309.5 617.8,311.5 631.5,314.4 643.2,319.3 660.8,326.1 675.7,325.4 683.5,328.4 696.2,335.2 704.0,338.0 715.7,343.0 724.5,343.0 735.2,334.2 744.0,322.5 753.8,299.0 762.0,287.3 768.7,281.8 784.3,258.4 803.8,233.0 813.6,222.2 822.4,213.4 833.1,214.4 846.8,217.3 856.8,221.8 868.5,222.7 884.1,227.6 905.6,222.7 921.2,225.7 938.8,221.8 944.7,214.9 948.6,210.8 961.5,193.6 968.6,191.5 977.2,194.3 990.1,193.6 1004.5,192.2 1026.0,191.0 1036.4,192.2" fill="none" stroke="#5555f5" stroke-width="1"/><polyline points="57.0,402.0 59.0,400.0 72.6,372.0 82.4,365.2 93.1,359.4 104.0,354.5 113.6,356.4 123.4,357.4 135.1,364.3 143.0,368.2 157.0,370.0 165.7,371.0 181.3,377.9 195.0,376.0 202.8,370.0 208.7,367.1 212.6,372.0 220.4,387.7 236.0,412.0 254.0,430.6 259.8,432.6 279.3,429.6 296.9,426.7 306.6,429.6 320.3,432.6 330.0,426.7 337.9,415.0 350.0,395.5 356.7,389.8 370.4,380.0 379.2,377.1 384.0,376.2 393.8,409.4 403.6,430.9 411.2,448.4 430.8,454.2 443.5,453.8 448.4,466.0 458.1,485.5 462.0,489.4 477.7,490.4 486.9,488.2 510.3,492.9 524.4,495.2 538.5,504.6 552.5,490.0 566.6,465.0 572.0,454.5 580.7,440.0 590.4,415.0 602.2,396.4 613.9,385.7 625.6,385.7 637.3,380.8 662.0,381.0 681.5,385.0 710.8,382.0 717.7,372.9 728.4,373.3 740.1,381.0 753.8,393.8 768.3,396.8 789.4,389.7 808.2,375.7 823.4,340.0 837.0,318.9 847.0,304.8 856.8,297.0 872.4,285.2 886.0,277.4 891.9,271.6 905.6,272.5 925.1,269.6 940.0,272.4 962.9,270.3 980.1,260.2 997.3,261.0 1011.6,257.4 1031.7,254.5 1036.4,251.6" fill="none" stroke="#5555f5" stroke-width="1"/><path d="M59.5 321.0V354.0" stroke="#1d5a38" stroke-width="1"/><rect x="58.5" y="325.0" width="2" height="17.0" fill="#f25a48" stroke="#5a1a14" stroke-width="1"/><path d="M64.5 322.0V345.0" stroke="#1d5a38" stroke-width="1"/><rect x="63.5" y="329.0" width="2" height="13.0" fill="#22c768" stroke="#135530" stroke-width="1"/><path d="M69.5 303.0V342.0" stroke="#1d5a38" stroke-width="1"/><rect x="68.5" y="316.0" width="2" height="14.0" fill="#22c768" stroke="#135530" stroke-width="1"/><path d="M74.5 297.0V318.0" stroke="#1d5a38" stroke-width="1"/><rect x="73.5" y="301.0" width="2" height="16.0" fill="#22c768" stroke="#135530" stroke-width="1"/><path d="M78.5 298.0V309.0" stroke="#1d5a38" stroke-width="1"/><rect x="77.5" y="301.0" width="2" height="2.0" fill="#f25a48" stroke="#5a1a14" stroke-width="1"/><path d="M83.5 289.0V307.0" stroke="#1d5a38" stroke-width="1"/><rect x="82.5" y="293.0" width="2" height="9.0" fill="#22c768" stroke="#135530" stroke-width="1"/><path d="M88.5 283.0V300.0" stroke="#1d5a38" stroke-width="1"/><rect x="87.5" y="292.6" width="2" height="1.0" fill="#22c768" stroke="#135530" stroke-width="1"/><path d="M93.5 285.0V300.0" stroke="#1d5a38" stroke-width="1"/><rect x="92.5" y="288.0" width="2" height="5.0" fill="#22c768" stroke="#135530" stroke-width="1"/><path d="M98.5 282.0V310.0" stroke="#1d5a38" stroke-width="1"/><rect x="97.5" y="287.0" width="2" height="11.0" fill="#f25a48" stroke="#5a1a14" stroke-width="1"/><path d="M103.5 281.0V301.0" stroke="#1d5a38" stroke-width="1"/><rect x="102.5" y="292.0" width="2" height="6.0" fill="#22c768" stroke="#135530" stroke-width="1"/><path d="M107.5 290.0V301.0" stroke="#1d5a38" stroke-width="1"/><rect x="106.5" y="292.0" width="2" height="6.0" fill="#f25a48" stroke="#5a1a14" stroke-width="1"/><path d="M112.5 298.0V322.0" stroke="#1d5a38" stroke-width="1"/><rect x="111.5" y="298.0" width="2" height="17.0" fill="#f25a48" stroke="#5a1a14" stroke-width="1"/><path d="M118.5 309.0V330.0" stroke="#1d5a38" stroke-width="1"/><rect x="117.5" y="315.0" width="2" height="15.0" fill="#f25a48" stroke="#5a1a14" stroke-width="1"/><path d="M123.5 320.0V342.0" stroke="#1d5a38" stroke-width="1"/><rect x="122.5" y="329.0" width="2" height="1.0" fill="#22c768" stroke="#135530" stroke-width="1"/><path d="M127.5 314.0V379.0" stroke="#1d5a38" stroke-width="1"/><rect x="126.5" y="328.0" width="2" height="33.0" fill="#f25a48" stroke="#5a1a14" stroke-width="1"/><path d="M132.5 352.0V368.0" stroke="#1d5a38" stroke-width="1"/><rect x="131.5" y="358.0" width="2" height="2.0" fill="#22c768" stroke="#135530" stroke-width="1"/><path d="M137.5 351.0V359.0" stroke="#1d5a38" stroke-width="1"/><rect x="136.5" y="356.0" width="2" height="2.0" fill="#22c768" stroke="#135530" stroke-width="1"/><path d="M141.5 344.0V360.0" stroke="#1d5a38" stroke-width="1"/><rect x="140.5" y="352.0" width="2" height="4.0" fill="#22c768" stroke="#135530" stroke-width="1"/><path d="M146.5 326.0V356.0" stroke="#1d5a38" stroke-width="1"/><rect x="145.5" y="328.0" width="2" height="25.5" fill="#22c768" stroke="#135530" stroke-width="1"/><path d="M152.5 319.0V346.0" stroke="#1d5a38" stroke-width="1"/><rect x="151.5" y="328.0" width="2" height="17.0" fill="#f25a48" stroke="#5a1a14" stroke-width="1"/><path d="M156.5 321.0V350.5" stroke="#1d5a38" stroke-width="1"/><rect x="155.5" y="341.0" width="2" height="3.7" fill="#22c768" stroke="#135530" stroke-width="1"/><path d="M161.5 327.0V342.7" stroke="#1d5a38" stroke-width="1"/><rect x="160.5" y="331.0" width="2" height="10.8" fill="#22c768" stroke="#135530" stroke-width="1"/><path d="M166.5 328.0V334.0" stroke="#1d5a38" stroke-width="1"/><rect x="165.5" y="330.6" width="2" height="2.0" fill="#f25a48" stroke="#5a1a14" stroke-width="1"/><path d="M171.5 341.8V355.4" stroke="#1d5a38" stroke-width="1"/><rect x="170.5" y="342.7" width="2" height="6.9" fill="#f25a48" stroke="#5a1a14" stroke-width="1"/><path d="M176.5 347.6V361.3" stroke="#1d5a38" stroke-width="1"/><rect x="175.5" y="350.0" width="2" height="1.5" fill="#f25a48" stroke="#5a1a14" stroke-width="1"/><path d="M181.5 343.7V353.5" stroke="#1d5a38" stroke-width="1"/><rect x="180.5" y="348.6" width="2" height="3.4" fill="#22c768" stroke="#135530" stroke-width="1"/><path d="M185.5 337.0V366.0" stroke="#1d5a38" stroke-width="1"/><rect x="184.5" y="347.0" width="2" height="3.5" fill="#22c768" stroke="#135530" stroke-width="1"/><path d="M190.5 344.7V351.5" stroke="#1d5a38" stroke-width="1"/><rect x="189.5" y="347.0" width="2" height="1.2" fill="#f25a48" stroke="#5a1a14" stroke-width="1"/><path d="M195.5 347.6V356.4" stroke="#1d5a38" stroke-width="1"/><rect x="194.5" y="348.2" width="2" height="6.3" fill="#f25a48" stroke="#5a1a14" stroke-width="1"/><path d="M200.5 330.0V354.5" stroke="#1d5a38" stroke-width="1"/><rect x="199.5" y="332.0" width="2" height="22.5" fill="#22c768" stroke="#135530" stroke-width="1"/><path d="M205.5 331.0V354.5" stroke="#1d5a38" stroke-width="1"/><rect x="204.5" y="332.0" width="2" height="13.7" fill="#f25a48" stroke="#5a1a14" stroke-width="1"/><path d="M210.5 343.7V366.0" stroke="#1d5a38" stroke-width="1"/><rect x="209.5" y="345.7" width="2" height="10.7" fill="#f25a48" stroke="#5a1a14" stroke-width="1"/><path d="M214.5 348.6V401.3" stroke="#1d5a38" stroke-width="1"/><rect x="213.5" y="355.4" width="2" height="34.2" fill="#f25a48" stroke="#5a1a14" stroke-width="1"/><path d="M220.5 386.7V401.3" stroke="#1d5a38" stroke-width="1"/><rect x="219.5" y="389.2" width="2" height="6.3" fill="#f25a48" stroke="#5a1a14" stroke-width="1"/><path d="M224.5 390.6V401.3" stroke="#1d5a38" stroke-width="1"/><rect x="223.5" y="392.0" width="2" height="3.5" fill="#22c768" stroke="#135530" stroke-width="1"/><path d="M229.5 383.4V405.2" stroke="#1d5a38" stroke-width="1"/><rect x="228.5" y="392.0" width="2" height="12.8" fill="#f25a48" stroke="#5a1a14" stroke-width="1"/><path d="M234.5 399.4V413.0" stroke="#1d5a38" stroke-width="1"/><rect x="233.5" y="404.3" width="2" height="1.0" fill="#f25a48" stroke="#5a1a14" stroke-width="1"/><path d="M239.5 399.4V431.6" stroke="#1d5a38" stroke-width="1"/><rect x="238.5" y="404.3" width="2" height="20.5" fill="#f25a48" stroke="#5a1a14" stroke-width="1"/><path d="M244.5 414.0V442.0" stroke="#1d5a38" stroke-width="1"/><rect x="243.5" y="424.8" width="2" height="1.0" fill="#22c768" stroke="#135530" stroke-width="1"/><path d="M248.5 385.7V426.7" stroke="#1d5a38" stroke-width="1"/><rect x="247.5" y="390.6" width="2" height="35.1" fill="#22c768" stroke="#135530" stroke-width="1"/><path d="M253.5 388.6V410.0" stroke="#1d5a38" stroke-width="1"/><rect x="252.5" y="390.6" width="2" height="6.8" fill="#f25a48" stroke="#5a1a14" stroke-width="1"/><path d="M258.5 385.7V402.3" stroke="#1d5a38" stroke-width="1"/><rect x="257.5" y="386.7" width="2" height="10.7" fill="#22c768" stroke="#135530" stroke-width="1"/><path d="M263.5 368.0V387.7" stroke="#1d5a38" stroke-width="1"/><rect x="262.5" y="375.0" width="2" height="12.7" fill="#22c768" stroke="#135530" stroke-width="1"/><path d="M268.5 356.4V377.0" stroke="#1d5a38" stroke-width="1"/><rect x="267.5" y="369.0" width="2" height="7.0" fill="#22c768" stroke="#135530" stroke-width="1"/><path d="M273.5 352.5V373.0" stroke="#1d5a38" stroke-width="1"/><rect x="272.5" y="363.2" width="2" height="6.5" fill="#22c768" stroke="#135530" stroke-width="1"/><path d="M277.5 359.3V395.5" stroke="#1d5a38" stroke-width="1"/><rect x="276.5" y="363.2" width="2" height="11.8" fill="#f25a48" stroke="#5a1a14" stroke-width="1"/><path d="M282.5 366.0V378.0" stroke="#1d5a38" stroke-width="1"/><rect x="281.5" y="367.0" width="2" height="7.4" fill="#22c768" stroke="#135530" stroke-width="1"/><path d="M288.5 366.0V391.6" stroke="#1d5a38" stroke-width="1"/><rect x="287.5" y="368.0" width="2" height="4.4" fill="#f25a48" stroke="#5a1a14" stroke-width="1"/><path d="M293.5 365.2V379.8" stroke="#1d5a38" stroke-width="1"/><rect x="292.5" y="372.0" width="2" height="1.0" fill="#22c768" stroke="#135530" stroke-width="1"/><path d="M297.5 344.7V373.0" stroke="#1d5a38" stroke-width="1"/><rect x="296.5" y="345.7" width="2" height="26.7" fill="#22c768" stroke="#135530" stroke-width="1"/><path d="M302.5 330.0V354.5" stroke="#1d5a38" stroke-width="1"/><rect x="301.5" y="332.0" width="2" height="14.6" fill="#22c768" stroke="#135530" stroke-width="1"/><path d="M307.5 325.0V352.5" stroke="#1d5a38" stroke-width="1"/><rect x="306.5" y="331.0" width="2" height="10.8" fill="#f25a48" stroke="#5a1a14" stroke-width="1"/><path d="M312.5 337.8V348.6" stroke="#1d5a38" stroke-width="1"/><rect x="311.5" y="341.8" width="2" height="6.8" fill="#f25a48" stroke="#5a1a14" stroke-width="1"/><path d="M316.5 317.3V338.8" stroke="#1d5a38" stroke-width="1"/><rect x="315.5" y="319.3" width="2" height="2.3" fill="#f25a48" stroke="#5a1a14" stroke-width="1"/><path d="M322.5 306.0V324.8" stroke="#1d5a38" stroke-width="1"/><rect x="321.5" y="318.3" width="2" height="3.3" fill="#22c768" stroke="#135530" stroke-width="1"/><path d="M326.5 308.6V346.6" stroke="#1d5a38" stroke-width="1"/><rect x="325.5" y="318.3" width="2" height="16.2" fill="#f25a48" stroke="#5a1a14" stroke-width="1"/><path d="M331.5 314.4V349.6" stroke="#1d5a38" stroke-width="1"/><rect x="330.5" y="317.3" width="2" height="16.1" fill="#22c768" stroke="#135530" stroke-width="1"/><path d="M336.5 315.0V332.0" stroke="#1d5a38" stroke-width="1"/><rect x="335.5" y="317.3" width="2" height="1.7" fill="#f25a48" stroke="#5a1a14" stroke-width="1"/><path d="M341.5 309.0V324.8" stroke="#1d5a38" stroke-width="1"/><rect x="340.5" y="314.4" width="2" height="3.9" fill="#22c768" stroke="#135530" stroke-width="1"/><path d="M345.5 311.5V326.7" stroke="#1d5a38" stroke-width="1"/><rect x="344.5" y="313.4" width="2" height="5.9" fill="#f25a48" stroke="#5a1a14" stroke-width="1"/><path d="M350.5 315.4V332.2" stroke="#1d5a38" stroke-width="1"/><rect x="349.5" y="318.5" width="2" height="12.8" fill="#f25a48" stroke="#5a1a14" stroke-width="1"/><path d="M356.5 313.7V332.2" stroke="#1d5a38" stroke-width="1"/><rect x="355.5" y="318.5" width="2" height="12.8" fill="#22c768" stroke="#135530" stroke-width="1"/><path d="M360.5 305.5V351.8" stroke="#1d5a38" stroke-width="1"/><rect x="359.5" y="318.0" width="2" height="28.9" fill="#f25a48" stroke="#5a1a14" stroke-width="1"/><path d="M365.5 343.0V367.4" stroke="#1d5a38" stroke-width="1"/><rect x="364.5" y="346.5" width="2" height="4.3" fill="#f25a48" stroke="#5a1a14" stroke-width="1"/><path d="M370.5 340.0V358.6" stroke="#1d5a38" stroke-width="1"/><rect x="369.5" y="350.4" width="2" height="4.3" fill="#f25a48" stroke="#5a1a14" stroke-width="1"/><path d="M375.5 346.9V369.3" stroke="#1d5a38" stroke-width="1"/><rect x="374.5" y="355.0" width="2" height="3.6" fill="#f25a48" stroke="#5a1a14" stroke-width="1"/><path d="M380.5 354.7V372.3" stroke="#1d5a38" stroke-width="1"/><rect x="379.5" y="358.2" width="2" height="14.1" fill="#f25a48" stroke="#5a1a14" stroke-width="1"/><path d="M384.5 366.4V389.8" stroke="#1d5a38" stroke-width="1"/><rect x="383.5" y="367.4" width="2" height="4.5" fill="#22c768" stroke="#135530" stroke-width="1"/><path d="M389.5 356.6V455.8" stroke="#1d5a38" stroke-width="1"/><rect x="388.5" y="367.4" width="2" height="61.2" fill="#f25a48" stroke="#5a1a14" stroke-width="1"/><path d="M394.5 426.0V442.5" stroke="#1d5a38" stroke-width="1"/><rect x="393.5" y="429.2" width="2" height="5.5" fill="#f25a48" stroke="#5a1a14" stroke-width="1"/><path d="M400.5 426.0V434.8" stroke="#1d5a38" stroke-width="1"/><rect x="399.5" y="426.0" width="2" height="8.3" fill="#22c768" stroke="#135530" stroke-width="1"/><path d="M404.5 413.2V432.7" stroke="#1d5a38" stroke-width="1"/><rect x="403.5" y="419.0" width="2" height="6.3" fill="#22c768" stroke="#135530" stroke-width="1"/><path d="M409.5 413.3V432.8" stroke="#1d5a38" stroke-width="1"/><rect x="408.5" y="419.0" width="2" height="2.4" fill="#f25a48" stroke="#5a1a14" stroke-width="1"/><path d="M414.5 385.0V421.5" stroke="#1d5a38" stroke-width="1"/><rect x="413.5" y="405.4" width="2" height="15.2" fill="#22c768" stroke="#135530" stroke-width="1"/><path d="M419.5 377.1V426.0" stroke="#1d5a38" stroke-width="1"/><rect x="418.5" y="388.8" width="2" height="17.6" fill="#22c768" stroke="#135530" stroke-width="1"/><path d="M423.5 369.3V390.8" stroke="#1d5a38" stroke-width="1"/><rect x="422.5" y="384.0" width="2" height="5.4" fill="#22c768" stroke="#135530" stroke-width="1"/><path d="M428.5 380.0V393.8" stroke="#1d5a38" stroke-width="1"/><rect x="427.5" y="383.0" width="2" height="10.3" fill="#f25a48" stroke="#5a1a14" stroke-width="1"/><path d="M433.5 383.0V404.4" stroke="#1d5a38" stroke-width="1"/><rect x="432.5" y="393.3" width="2" height="10.1" fill="#f25a48" stroke="#5a1a14" stroke-width="1"/><path d="M438.5 393.3V406.4" stroke="#1d5a38" stroke-width="1"/><rect x="437.5" y="401.0" width="2" height="3.4" fill="#22c768" stroke="#135530" stroke-width="1"/><path d="M444.5 390.7V421.0" stroke="#1d5a38" stroke-width="1"/><rect x="443.5" y="401.0" width="2" height="10.3" fill="#f25a48" stroke="#5a1a14" stroke-width="1"/><path d="M449.5 410.3V508.0" stroke="#1d5a38" stroke-width="1"/><rect x="448.5" y="411.3" width="2" height="77.1" fill="#f25a48" stroke="#5a1a14" stroke-width="1"/><path d="M453.5 471.8V489.4" stroke="#1d5a38" stroke-width="1"/><rect x="452.5" y="479.2" width="2" height="9.2" fill="#22c768" stroke="#135530" stroke-width="1"/><path d="M458.5 466.0V480.0" stroke="#1d5a38" stroke-width="1"/><rect x="457.5" y="467.9" width="2" height="11.7" fill="#22c768" stroke="#135530" stroke-width="1"/><path d="M463.5 458.0V479.6" stroke="#1d5a38" stroke-width="1"/><rect x="462.5" y="459.0" width="2" height="20.2" fill="#22c768" stroke="#135530" stroke-width="1"/><path d="M467.5 437.6V462.0" stroke="#1d5a38" stroke-width="1"/><rect x="466.5" y="440.2" width="2" height="19.5" fill="#22c768" stroke="#135530" stroke-width="1"/><path d="M472.5 434.7V450.3" stroke="#1d5a38" stroke-width="1"/><rect x="471.5" y="440.0" width="2" height="9.5" fill="#f25a48" stroke="#5a1a14" stroke-width="1"/><path d="M478.5 437.6V464.0" stroke="#1d5a38" stroke-width="1"/><rect x="477.5" y="449.0" width="2" height="1.2" fill="#f25a48" stroke="#5a1a14" stroke-width="1"/><path d="M482.5 426.0V450.6" stroke="#1d5a38" stroke-width="1"/><rect x="481.5" y="431.0" width="2" height="19.2" fill="#22c768" stroke="#135530" stroke-width="1"/><path d="M487.5 425.0V438.0" stroke="#1d5a38" stroke-width="1"/><rect x="486.5" y="431.0" width="2" height="3.6" fill="#f25a48" stroke="#5a1a14" stroke-width="1"/><path d="M492.5 414.5V441.8" stroke="#1d5a38" stroke-width="1"/><rect x="491.5" y="434.0" width="2" height="6.9" fill="#f25a48" stroke="#5a1a14" stroke-width="1"/><path d="M496.5 421.3V447.7" stroke="#1d5a38" stroke-width="1"/><rect x="495.5" y="422.3" width="2" height="18.2" fill="#22c768" stroke="#135530" stroke-width="1"/><path d="M501.5 396.0V423.3" stroke="#1d5a38" stroke-width="1"/><rect x="500.5" y="405.7" width="2" height="17.2" fill="#22c768" stroke="#135530" stroke-width="1"/><path d="M506.5 370.0V413.5" stroke="#1d5a38" stroke-width="1"/><rect x="505.5" y="383.2" width="2" height="23.5" fill="#22c768" stroke="#135530" stroke-width="1"/><path d="M512.5 380.3V395.0" stroke="#1d5a38" stroke-width="1"/><rect x="511.5" y="383.2" width="2" height="3.4" fill="#f25a48" stroke="#5a1a14" stroke-width="1"/><path d="M516.5 381.3V393.0" stroke="#1d5a38" stroke-width="1"/><rect x="515.5" y="385.2" width="2" height="6.8" fill="#f25a48" stroke="#5a1a14" stroke-width="1"/><path d="M520.5 376.4V392.0" stroke="#1d5a38" stroke-width="1"/><rect x="519.5" y="386.2" width="2" height="5.8" fill="#22c768" stroke="#135530" stroke-width="1"/><path d="M526.5 373.5V387.0" stroke="#1d5a38" stroke-width="1"/><rect x="525.5" y="380.0" width="2" height="6.6" fill="#22c768" stroke="#135530" stroke-width="1"/><path d="M531.5 360.8V382.7" stroke="#1d5a38" stroke-width="1"/><rect x="530.5" y="361.8" width="2" height="18.9" fill="#22c768" stroke="#135530" stroke-width="1"/><path d="M536.5 353.0V390.0" stroke="#1d5a38" stroke-width="1"/><rect x="535.5" y="361.8" width="2" height="17.0" fill="#f25a48" stroke="#5a1a14" stroke-width="1"/><path d="M540.5 318.8V404.7" stroke="#1d5a38" stroke-width="1"/><rect x="539.5" y="319.8" width="2" height="59.0" fill="#22c768" stroke="#135530" stroke-width="1"/><path d="M545.5 318.2V337.0" stroke="#1d5a38" stroke-width="1"/><rect x="544.5" y="322.0" width="2" height="8.5" fill="#f25a48" stroke="#5a1a14" stroke-width="1"/><path d="M550.5 325.2V343.2" stroke="#1d5a38" stroke-width="1"/><rect x="549.5" y="329.5" width="2" height="12.7" fill="#f25a48" stroke="#5a1a14" stroke-width="1"/><path d="M554.5 325.6V354.0" stroke="#1d5a38" stroke-width="1"/><rect x="553.5" y="329.5" width="2" height="12.1" fill="#22c768" stroke="#135530" stroke-width="1"/><path d="M560.5 328.6V367.6" stroke="#1d5a38" stroke-width="1"/><rect x="559.5" y="329.5" width="2" height="23.1" fill="#f25a48" stroke="#5a1a14" stroke-width="1"/><path d="M565.5 310.0V361.8" stroke="#1d5a38" stroke-width="1"/><rect x="564.5" y="329.5" width="2" height="23.1" fill="#22c768" stroke="#135530" stroke-width="1"/><path d="M570.5 325.0V363.0" stroke="#1d5a38" stroke-width="1"/><rect x="569.5" y="330.0" width="2" height="21.8" fill="#f25a48" stroke="#5a1a14" stroke-width="1"/><path d="M574.5 342.7V355.4" stroke="#1d5a38" stroke-width="1"/><rect x="573.5" y="351.5" width="2" height="3.0" fill="#f25a48" stroke="#5a1a14" stroke-width="1"/><path d="M579.5 347.6V365.2" stroke="#1d5a38" stroke-width="1"/><rect x="578.5" y="354.0" width="2" height="2.4" fill="#f25a48" stroke="#5a1a14" stroke-width="1"/><path d="M584.5 336.0V356.4" stroke="#1d5a38" stroke-width="1"/><rect x="583.5" y="336.9" width="2" height="19.5" fill="#22c768" stroke="#135530" stroke-width="1"/><path d="M588.5 325.2V341.8" stroke="#1d5a38" stroke-width="1"/><rect x="587.5" y="328.0" width="2" height="9.9" fill="#22c768" stroke="#135530" stroke-width="1"/><path d="M593.5 309.5V342.7" stroke="#1d5a38" stroke-width="1"/><rect x="592.5" y="328.0" width="2" height="6.5" fill="#f25a48" stroke="#5a1a14" stroke-width="1"/><path d="M598.5 332.0V346.6" stroke="#1d5a38" stroke-width="1"/><rect x="597.5" y="334.0" width="2" height="9.7" fill="#f25a48" stroke="#5a1a14" stroke-width="1"/><path d="M603.5 339.0V345.0" stroke="#1d5a38" stroke-width="1"/><rect x="602.5" y="341.8" width="2" height="1.9" fill="#f25a48" stroke="#5a1a14" stroke-width="1"/><path d="M608.5 334.0V353.5" stroke="#1d5a38" stroke-width="1"/><rect x="607.5" y="337.9" width="2" height="9.7" fill="#f25a48" stroke="#5a1a14" stroke-width="1"/><path d="M614.5 347.0V385.7" stroke="#1d5a38" stroke-width="1"/><rect x="613.5" y="347.0" width="2" height="22.1" fill="#f25a48" stroke="#5a1a14" stroke-width="1"/><path d="M618.5 361.3V404.3" stroke="#1d5a38" stroke-width="1"/><rect x="617.5" y="368.0" width="2" height="26.5" fill="#f25a48" stroke="#5a1a14" stroke-width="1"/><path d="M623.5 365.2V415.0" stroke="#1d5a38" stroke-width="1"/><rect x="622.5" y="371.0" width="2" height="23.5" fill="#22c768" stroke="#135530" stroke-width="1"/><path d="M628.5 350.5V377.9" stroke="#1d5a38" stroke-width="1"/><rect x="627.5" y="354.5" width="2" height="17.1" fill="#22c768" stroke="#135530" stroke-width="1"/><path d="M633.5 348.6V362.3" stroke="#1d5a38" stroke-width="1"/><rect x="632.5" y="355.4" width="2" height="5.9" fill="#f25a48" stroke="#5a1a14" stroke-width="1"/><path d="M637.5 337.9V361.3" stroke="#1d5a38" stroke-width="1"/><rect x="636.5" y="348.6" width="2" height="12.1" fill="#22c768" stroke="#135530" stroke-width="1"/><path d="M642.5 345.7V366.6" stroke="#1d5a38" stroke-width="1"/><rect x="641.5" y="348.6" width="2" height="3.9" fill="#f25a48" stroke="#5a1a14" stroke-width="1"/><path d="M647.5 337.9V355.4" stroke="#1d5a38" stroke-width="1"/><rect x="646.5" y="351.0" width="2" height="1.5" fill="#22c768" stroke="#135530" stroke-width="1"/><path d="M652.5 345.7V380.8" stroke="#1d5a38" stroke-width="1"/><rect x="651.5" y="351.0" width="2" height="7.4" fill="#f25a48" stroke="#5a1a14" stroke-width="1"/><path d="M657.5 343.7V360.3" stroke="#1d5a38" stroke-width="1"/><rect x="656.5" y="354.8" width="2" height="3.6" fill="#22c768" stroke="#135530" stroke-width="1"/><path d="M662.5 351.0V361.3" stroke="#1d5a38" stroke-width="1"/><rect x="661.5" y="354.8" width="2" height="1.0" fill="#22c768" stroke="#135530" stroke-width="1"/><path d="M666.5 348.0V364.5" stroke="#1d5a38" stroke-width="1"/><rect x="665.5" y="354.7" width="2" height="1.0" fill="#22c768" stroke="#135530" stroke-width="1"/><path d="M671.5 347.0V366.4" stroke="#1d5a38" stroke-width="1"/><rect x="670.5" y="354.7" width="2" height="7.8" fill="#f25a48" stroke="#5a1a14" stroke-width="1"/><path d="M676.5 358.6V389.9" stroke="#1d5a38" stroke-width="1"/><rect x="675.5" y="362.0" width="2" height="17.5" fill="#f25a48" stroke="#5a1a14" stroke-width="1"/><path d="M682.5 347.9V382.0" stroke="#1d5a38" stroke-width="1"/><rect x="681.5" y="360.0" width="2" height="19.5" fill="#22c768" stroke="#135530" stroke-width="1"/><path d="M686.5 345.0V361.6" stroke="#1d5a38" stroke-width="1"/><rect x="685.5" y="347.9" width="2" height="12.7" fill="#22c768" stroke="#135530" stroke-width="1"/><path d="M691.5 347.0V356.7" stroke="#1d5a38" stroke-width="1"/><rect x="690.5" y="347.9" width="2" height="4.9" fill="#f25a48" stroke="#5a1a14" stroke-width="1"/><path d="M696.5 345.0V361.6" stroke="#1d5a38" stroke-width="1"/><rect x="695.5" y="352.2" width="2" height="4.5" fill="#f25a48" stroke="#5a1a14" stroke-width="1"/><path d="M701.5 350.0V361.0" stroke="#1d5a38" stroke-width="1"/><rect x="700.5" y="351.8" width="2" height="4.9" fill="#22c768" stroke="#135530" stroke-width="1"/><path d="M705.5 324.8V374.3" stroke="#1d5a38" stroke-width="1"/><rect x="704.5" y="351.8" width="2" height="15.6" fill="#f25a48" stroke="#5a1a14" stroke-width="1"/><path d="M710.5 353.4V378.2" stroke="#1d5a38" stroke-width="1"/><rect x="709.5" y="366.4" width="2" height="1.0" fill="#22c768" stroke="#135530" stroke-width="1"/><path d="M716.5 357.6V367.0" stroke="#1d5a38" stroke-width="1"/><rect x="715.5" y="358.6" width="2" height="7.8" fill="#22c768" stroke="#135530" stroke-width="1"/><path d="M721.5 357.7V367.4" stroke="#1d5a38" stroke-width="1"/><rect x="720.5" y="359.2" width="2" height="4.3" fill="#f25a48" stroke="#5a1a14" stroke-width="1"/><path d="M726.5 353.4V365.5" stroke="#1d5a38" stroke-width="1"/><rect x="725.5" y="355.7" width="2" height="7.8" fill="#22c768" stroke="#135530" stroke-width="1"/><path d="M730.5 338.0V356.7" stroke="#1d5a38" stroke-width="1"/><rect x="729.5" y="339.7" width="2" height="17.0" fill="#22c768" stroke="#135530" stroke-width="1"/><path d="M735.5 334.2V351.8" stroke="#1d5a38" stroke-width="1"/><rect x="734.5" y="335.2" width="2" height="5.3" fill="#22c768" stroke="#135530" stroke-width="1"/><path d="M740.5 304.0V340.5" stroke="#1d5a38" stroke-width="1"/><rect x="739.5" y="311.8" width="2" height="24.0" fill="#22c768" stroke="#135530" stroke-width="1"/><path d="M744.5 306.9V319.6" stroke="#1d5a38" stroke-width="1"/><rect x="743.5" y="306.9" width="2" height="5.8" fill="#22c768" stroke="#135530" stroke-width="1"/><path d="M750.5 306.9V314.7" stroke="#1d5a38" stroke-width="1"/><rect x="749.5" y="306.9" width="2" height="1.5" fill="#f25a48" stroke="#5a1a14" stroke-width="1"/><path d="M755.5 267.8V299.0" stroke="#1d5a38" stroke-width="1"/><rect x="754.5" y="285.5" width="2" height="9.7" fill="#22c768" stroke="#135530" stroke-width="1"/><path d="M760.5 280.6V309.4" stroke="#1d5a38" stroke-width="1"/><rect x="759.5" y="285.2" width="2" height="18.4" fill="#f25a48" stroke="#5a1a14" stroke-width="1"/><path d="M764.5 295.5V305.6" stroke="#1d5a38" stroke-width="1"/><rect x="763.5" y="297.0" width="2" height="7.8" fill="#22c768" stroke="#135530" stroke-width="1"/><path d="M769.5 256.4V303.3" stroke="#1d5a38" stroke-width="1"/><rect x="768.5" y="270.0" width="2" height="27.4" fill="#22c768" stroke="#135530" stroke-width="1"/><path d="M774.5 268.0V285.7" stroke="#1d5a38" stroke-width="1"/><rect x="773.5" y="270.0" width="2" height="7.5" fill="#f25a48" stroke="#5a1a14" stroke-width="1"/><path d="M778.5 272.0V280.8" stroke="#1d5a38" stroke-width="1"/><rect x="777.5" y="277.0" width="2" height="1.0" fill="#22c768" stroke="#135530" stroke-width="1"/><path d="M784.5 264.2V296.4" stroke="#1d5a38" stroke-width="1"/><rect x="783.5" y="277.5" width="2" height="10.2" fill="#f25a48" stroke="#5a1a14" stroke-width="1"/><path d="M789.5 275.0V297.4" stroke="#1d5a38" stroke-width="1"/><rect x="788.5" y="276.0" width="2" height="11.7" fill="#22c768" stroke="#135530" stroke-width="1"/><path d="M794.5 267.0V280.8" stroke="#1d5a38" stroke-width="1"/><rect x="793.5" y="271.0" width="2" height="5.3" fill="#22c768" stroke="#135530" stroke-width="1"/><path d="M798.5 239.8V272.0" stroke="#1d5a38" stroke-width="1"/><rect x="797.5" y="248.2" width="2" height="22.8" fill="#22c768" stroke="#135530" stroke-width="1"/><path d="M802.5 236.0V251.5" stroke="#1d5a38" stroke-width="1"/><rect x="801.5" y="236.9" width="2" height="11.7" fill="#22c768" stroke="#135530" stroke-width="1"/><path d="M807.5 235.0V247.6" stroke="#1d5a38" stroke-width="1"/><rect x="806.5" y="238.4" width="2" height="3.4" fill="#f25a48" stroke="#5a1a14" stroke-width="1"/><path d="M812.5 229.0V244.7" stroke="#1d5a38" stroke-width="1"/><rect x="811.5" y="242.3" width="2" height="1.0" fill="#f25a48" stroke="#5a1a14" stroke-width="1"/><path d="M818.5 235.0V249.6" stroke="#1d5a38" stroke-width="1"/><rect x="817.5" y="237.9" width="2" height="5.8" fill="#22c768" stroke="#135530" stroke-width="1"/><path d="M822.5 213.4V238.8" stroke="#1d5a38" stroke-width="1"/><rect x="821.5" y="217.0" width="2" height="21.4" fill="#22c768" stroke="#135530" stroke-width="1"/><path d="M827.5 215.0V258.4" stroke="#1d5a38" stroke-width="1"/><rect x="826.5" y="217.0" width="2" height="29.6" fill="#f25a48" stroke="#5a1a14" stroke-width="1"/><path d="M832.5 242.3V262.3" stroke="#1d5a38" stroke-width="1"/><rect x="831.5" y="246.6" width="2" height="4.9" fill="#f25a48" stroke="#5a1a14" stroke-width="1"/><path d="M836.5 246.6V276.0" stroke="#1d5a38" stroke-width="1"/><rect x="835.5" y="248.6" width="2" height="10.7" fill="#f25a48" stroke="#5a1a14" stroke-width="1"/><path d="M841.5 249.6V268.0" stroke="#1d5a38" stroke-width="1"/><rect x="840.5" y="255.4" width="2" height="3.9" fill="#22c768" stroke="#135530" stroke-width="1"/><path d="M847.5 241.2V265.2" stroke="#1d5a38" stroke-width="1"/><rect x="846.5" y="249.3" width="2" height="6.4" fill="#22c768" stroke="#135530" stroke-width="1"/><path d="M851.5 245.7V269.0" stroke="#1d5a38" stroke-width="1"/><rect x="850.5" y="249.3" width="2" height="17.2" fill="#f25a48" stroke="#5a1a14" stroke-width="1"/><path d="M856.5 247.0V276.4" stroke="#1d5a38" stroke-width="1"/><rect x="855.5" y="261.8" width="2" height="5.9" fill="#22c768" stroke="#135530" stroke-width="1"/><path d="M861.5 252.0V261.8" stroke="#1d5a38" stroke-width="1"/><rect x="860.5" y="255.0" width="2" height="6.4" fill="#22c768" stroke="#135530" stroke-width="1"/><path d="M866.5 248.0V257.9" stroke="#1d5a38" stroke-width="1"/><rect x="865.5" y="249.0" width="2" height="7.0" fill="#22c768" stroke="#135530" stroke-width="1"/><path d="M870.5 248.0V263.8" stroke="#1d5a38" stroke-width="1"/><rect x="869.5" y="249.0" width="2" height="14.8" fill="#f25a48" stroke="#5a1a14" stroke-width="1"/><path d="M876.5 253.0V269.6" stroke="#1d5a38" stroke-width="1"/><rect x="875.5" y="256.0" width="2" height="7.8" fill="#22c768" stroke="#135530" stroke-width="1"/><path d="M881.5 247.0V260.8" stroke="#1d5a38" stroke-width="1"/><rect x="880.5" y="256.0" width="2" height="2.9" fill="#f25a48" stroke="#5a1a14" stroke-width="1"/><path d="M886.5 244.2V298.0" stroke="#1d5a38" stroke-width="1"/><rect x="885.5" y="247.0" width="2" height="11.9" fill="#22c768" stroke="#135530" stroke-width="1"/><path d="M890.5 233.5V250.0" stroke="#1d5a38" stroke-width="1"/><rect x="889.5" y="234.5" width="2" height="13.6" fill="#22c768" stroke="#135530" stroke-width="1"/><path d="M895.5 233.5V242.3" stroke="#1d5a38" stroke-width="1"/><rect x="894.5" y="234.5" width="2" height="1.0" fill="#22c768" stroke="#135530" stroke-width="1"/><path d="M899.5 225.7V243.2" stroke="#1d5a38" stroke-width="1"/><rect x="898.5" y="232.0" width="2" height="2.5" fill="#22c768" stroke="#135530" stroke-width="1"/><path d="M904.5 225.7V242.3" stroke="#1d5a38" stroke-width="1"/><rect x="903.5" y="232.0" width="2" height="9.3" fill="#f25a48" stroke="#5a1a14" stroke-width="1"/><path d="M910.5 228.6V244.2" stroke="#1d5a38" stroke-width="1"/><rect x="909.5" y="237.4" width="2" height="2.9" fill="#22c768" stroke="#135530" stroke-width="1"/><path d="M914.5 228.2V248.1" stroke="#1d5a38" stroke-width="1"/><rect x="913.5" y="234.0" width="2" height="3.4" fill="#22c768" stroke="#135530" stroke-width="1"/><path d="M920.5 231.0V244.2" stroke="#1d5a38" stroke-width="1"/><rect x="919.5" y="232.0" width="2" height="2.5" fill="#22c768" stroke="#135530" stroke-width="1"/><path d="M924.5 229.0V235.4" stroke="#1d5a38" stroke-width="1"/><rect x="923.5" y="230.0" width="2" height="4.0" fill="#22c768" stroke="#135530" stroke-width="1"/><path d="M929.5 229.6V240.3" stroke="#1d5a38" stroke-width="1"/><rect x="928.5" y="230.0" width="2" height="7.4" fill="#f25a48" stroke="#5a1a14" stroke-width="1"/><path d="M934.5 227.6V239.3" stroke="#1d5a38" stroke-width="1"/><rect x="933.5" y="228.6" width="2" height="9.8" fill="#22c768" stroke="#135530" stroke-width="1"/><path d="M938.5 227.6V250.0" stroke="#1d5a38" stroke-width="1"/><rect x="937.5" y="228.6" width="2" height="21.1" fill="#f25a48" stroke="#5a1a14" stroke-width="1"/><path d="M943.5 196.2V249.5" stroke="#1d5a38" stroke-width="1"/><rect x="942.5" y="204.4" width="2" height="45.1" fill="#22c768" stroke="#135530" stroke-width="1"/><path d="M948.5 200.0V212.5" stroke="#1d5a38" stroke-width="1"/><rect x="947.5" y="204.4" width="2" height="7.6" fill="#f25a48" stroke="#5a1a14" stroke-width="1"/><path d="M953.5 200.0V212.0" stroke="#1d5a38" stroke-width="1"/><rect x="952.5" y="204.4" width="2" height="7.1" fill="#22c768" stroke="#135530" stroke-width="1"/><path d="M958.5 199.4V210.5" stroke="#1d5a38" stroke-width="1"/><rect x="957.5" y="200.8" width="2" height="3.6" fill="#22c768" stroke="#135530" stroke-width="1"/><path d="M963.5 187.9V205.8" stroke="#1d5a38" stroke-width="1"/><rect x="962.5" y="191.0" width="2" height="11.5" fill="#22c768" stroke="#135530" stroke-width="1"/><path d="M968.5 189.0V219.4" stroke="#1d5a38" stroke-width="1"/><rect x="967.5" y="191.0" width="2" height="17.7" fill="#f25a48" stroke="#5a1a14" stroke-width="1"/><path d="M973.5 200.8V265.5" stroke="#1d5a38" stroke-width="1"/><rect x="972.5" y="207.2" width="2" height="39.4" fill="#f25a48" stroke="#5a1a14" stroke-width="1"/><path d="M978.5 230.2V249.5" stroke="#1d5a38" stroke-width="1"/><rect x="977.5" y="231.6" width="2" height="16.4" fill="#22c768" stroke="#135530" stroke-width="1"/><path d="M982.5 231.2V243.5" stroke="#1d5a38" stroke-width="1"/><rect x="981.5" y="231.2" width="2" height="12.3" fill="#f25a48" stroke="#5a1a14" stroke-width="1"/><path d="M988.5 236.9V248.8" stroke="#1d5a38" stroke-width="1"/><rect x="987.5" y="241.2" width="2" height="1.8" fill="#22c768" stroke="#135530" stroke-width="1"/><path d="M992.5 236.9V253.0" stroke="#1d5a38" stroke-width="1"/><rect x="991.5" y="240.9" width="2" height="1.0" fill="#22c768" stroke="#135530" stroke-width="1"/><path d="M997.5 225.9V241.6" stroke="#1d5a38" stroke-width="1"/><rect x="996.5" y="230.9" width="2" height="10.7" fill="#22c768" stroke="#135530" stroke-width="1"/><path d="M1002.5 213.0V270.7" stroke="#1d5a38" stroke-width="1"/><rect x="1001.5" y="217.3" width="2" height="14.3" fill="#22c768" stroke="#135530" stroke-width="1"/><path d="M1006.5 216.5V226.6" stroke="#1d5a38" stroke-width="1"/><rect x="1005.5" y="216.8" width="2" height="6.6" fill="#f25a48" stroke="#5a1a14" stroke-width="1"/><path d="M1011.5 220.0V225.4" stroke="#1d5a38" stroke-width="1"/><rect x="1010.5" y="223.4" width="2" height="1.0" fill="#22c768" stroke="#135530" stroke-width="1"/><path d="M1016.5 219.7V229.7" stroke="#1d5a38" stroke-width="1"/><rect x="1015.5" y="223.7" width="2" height="1.0" fill="#22c768" stroke="#135530" stroke-width="1"/><path d="M1021.5 220.0V230.9" stroke="#1d5a38" stroke-width="1"/><rect x="1020.5" y="223.5" width="2" height="1.0" fill="#22c768" stroke="#135530" stroke-width="1"/><path d="M1026.5 220.0V228.3" stroke="#1d5a38" stroke-width="1"/><rect x="1025.5" y="222.0" width="2" height="1.0" fill="#22c768" stroke="#135530" stroke-width="1"/><path d="M1031.5 220.8V228.3" stroke="#1d5a38" stroke-width="1"/><rect x="1030.5" y="222.3" width="2" height="2.1" fill="#f25a48" stroke="#5a1a14" stroke-width="1"/><path d="M1036.5 222.3V225.9" stroke="#1d5a38" stroke-width="1"/><rect x="1035.5" y="223.4" width="2" height="1.0" fill="#22c768" stroke="#135530" stroke-width="1"/><polyline points="57.0,360.0 59.0,354.5 66.8,332.0 74.6,297.9 78.5,295.9 83.4,290.0 88.2,288.0 93.3,280.3 98.4,299.8 102.7,284.2 107.8,302.7 112.7,328.1 116.6,355.5 119.5,375.0 123.4,400.0 129.0,430.0 142.0,400.0 145.9,361.3 148.8,375.0 154.0,379.8 157.9,374.0 161.8,354.5 166.7,355.4 170.6,391.6 175.5,395.5 185.2,383.8 191.1,387.7 195.0,400.4 199.9,354.5 202.8,354.5 205.8,366.2 210.6,399.4 216.4,455.0 223.4,446.0 230.5,469.0 239.8,497.5 244.5,495.0 250.0,410.0 253.9,411.0 261.7,374.0 265.6,362.3 273.4,335.9 278.3,359.3 282.2,346.6 287.1,358.4 292.0,357.4 296.9,319.3 299.2,277.2 306.3,286.6 311.0,319.4 320.3,267.8 325.0,300.6 332.0,274.9 341.4,281.9 348.5,310.0 354.8,298.0 359.6,343.0 360.6,360.5 374.3,384.0 379.2,411.3 382.1,405.5 385.0,387.9 388.8,486.4 394.6,493.3 399.5,473.8 404.4,455.2 409.3,457.1 414.2,423.0 419.0,380.0 423.5,368.6 426.9,380.0 432.7,403.4 438.6,405.4 444.5,428.8 448.4,505.0 454.2,497.2 458.1,473.8 466.9,409.3 471.8,421.0 476.7,422.0 481.8,383.2 491.5,396.9 497.4,356.9 505.6,298.3 515.0,314.7 529.0,270.0 533.8,296.0 540.8,232.7 552.5,279.5 557.2,260.8 559.5,274.9 564.2,279.5 569.9,317.3 578.7,324.2 582.6,301.7 590.0,286.6 596.3,307.6 598.2,316.4 603.1,318.3 608.0,327.1 610.0,344.7 613.9,372.0 618.2,409.1 622.7,374.0 627.5,339.8 632.4,347.6 636.9,331.0 642.2,336.9 647.1,334.9 652.0,348.6 656.8,342.7 664.7,342.7 667.9,344.0 676.6,399.6 681.5,351.8 686.4,326.4 691.3,334.2 695.6,345.0 700.1,337.1 703.0,340.1 705.4,373.3 708.9,369.4 714.7,352.8 720.6,361.6 725.5,344.0 729.4,304.9 734.3,293.2 740.2,242.0 747.2,239.7 755.0,209.5 758.9,264.2 768.7,219.3 773.6,238.8 778.4,240.8 784.3,268.1 788.2,252.5 796.0,209.5 802.9,198.8 811.6,219.3 817.5,213.4 822.2,188.0 826.3,242.7 836.1,307.2 845.8,288.6 850.7,333.0 864.5,300.6 869.2,335.8 873.9,321.7 881.0,326.4 886.0,295.0 890.0,277.4 895.8,276.4 899.3,271.6 904.6,300.9 911.5,291.1 925.1,277.4 929.0,301.8 934.9,281.3 938.6,353.4 942.9,256.0 948.6,277.4 952.9,267.4 958.7,260.3 963.8,244.0 968.7,293.2 973.0,379.2 977.3,352.0 983.0,372.0 991.6,366.3 1003.0,316.1 1007.4,331.9 1016.0,333.3 1026.0,330.5 1031.7,336.2 1036.6,331.9" fill="none" stroke="#a24fc2" stroke-width="1.1"/></g><g clip-path="url(#cs)"><rect x="57" y="570.5" width="1230" height="76" fill="#e5cce7"/><path d="M57 570.5H1287M57 646.5H1287" stroke="#787878" stroke-width="1" stroke-dasharray="5.5 5.5"/><polyline points="57.0,664.5 59.0,663.8 66.8,659.9 72.6,645.2 83.4,627.7 88.3,624.7 93.1,620.2 98.0,622.8 102.9,605.2 107.4,598.4 112.7,605.2 117.5,639.4 122.4,665.7 127.3,670.2 135.1,668.7 142.0,661.8 146.8,640.4 156.6,623.4 161.5,620.8 166.4,611.0 171.3,613.0 176.1,620.2 180.4,621.8 184.9,610.0 190.8,604.2 195.7,611.0 200.6,594.5 205.4,595.4 209.3,605.2 220.1,668.7 228.9,668.7 238.6,670.6 243.5,671.0 258.2,593.5 264.0,580.8 273.8,549.9 279.7,551.5 287.5,559.3 293.3,558.9 301.1,550.5 307.8,548.6 311.7,562.2 316.6,562.2 321.5,557.3 331.3,568.0 336.1,575.0 341.0,560.3 346.9,571.0 350.8,585.7 355.7,595.4 360.5,619.8 366.4,643.3 370.3,671.0 379.1,671.0 384.0,668.3 399.6,667.7 409.4,652.0 417.2,625.7 423.0,592.5 427.9,572.0 433.8,566.1 443.6,583.7 452.3,640.4 457.2,652.0 462.1,633.5 468.0,607.1 472.9,593.5 482.6,579.8 491.4,558.3 497.3,553.4 507.0,544.1 511.9,545.6 520.7,551.5 530.5,546.6 535.4,555.4 540.2,555.4 546.1,560.3 549.9,561.6 554.8,571.0 559.6,588.6 564.5,596.4 570.4,629.6 579.2,671.0 588.0,641.3 593.4,629.6 599.7,641.3 608.5,663.8 618.2,671.0 630.9,617.9 637.8,601.3 642.7,599.3 647.5,593.5 651.4,599.3 656.3,599.3 667.1,585.3 671.6,585.7 676.8,611.0 681.7,611.0 691.5,562.2 695.4,561.3 701.3,570.0 709.1,596.4 715.9,613.0 725.7,596.4 734.5,555.4 739.3,544.6 753.0,544.6 762.8,571.0 768.6,574.0 778.4,564.8 783.3,577.9 792.9,590.9 797.8,574.9 802.7,562.2 807.6,555.4 817.3,574.0 822.2,566.7 826.1,580.8 836.9,671.0 841.8,668.7 845.7,662.8 861.3,662.4 865.2,651.5 874.0,656.0 880.2,665.2 885.7,655.0 899.4,547.6 902.3,554.4 909.1,576.9 914.4,588.2 924.2,565.5 929.1,576.5 934.1,574.5 938.4,613.6 943.3,593.5 948.2,596.4 953.7,557.3 958.0,559.3 963.4,550.5 968.7,564.2 982.4,659.9 987.3,656.0 992.7,661.3 997.0,655.0 1006.8,625.7 1011.7,622.2 1016.6,626.7 1026.3,626.7 1032.2,617.9 1036.5,602.3" fill="none" stroke="#4f4ff5" stroke-width="1"/><polyline points="57.0,665.5 59.0,664.8 67.7,660.9 73.6,651.1 84.3,633.5 93.1,623.8 98.0,623.4 112.7,603.2 117.5,614.0 125.4,651.1 130.2,664.8 135.1,669.6 142.0,664.8 148.8,649.1 156.6,630.6 167.3,616.9 173.2,615.0 180.0,617.9 185.9,615.9 195.7,609.1 201.5,603.2 209.3,597.4 214.2,615.9 225.0,661.8 230.8,667.7 237.7,669.0 243.5,670.2 249.4,662.8 260.1,615.9 269.9,574.9 277.7,555.4 282.6,552.5 294.3,557.3 300.0,556.4 307.8,551.1 319.5,560.3 330.3,562.2 336.1,568.0 344.9,567.1 350.8,571.0 356.6,584.7 362.5,604.2 370.3,643.3 379.1,670.6 387.9,669.0 399.6,667.7 409.4,660.9 419.1,631.6 427.0,596.4 434.8,574.9 438.7,571.0 444.5,574.9 450.4,598.4 457.2,634.5 462.1,641.3 468.0,627.7 476.8,596.4 487.5,574.9 497.3,558.3 507.0,548.6 512.9,546.0 521.7,549.5 528.5,549.5 536.3,550.5 545.0,556.4 550.9,560.3 558.7,574.0 564.5,585.7 579.2,647.2 585.0,659.9 589.0,657.0 597.7,636.4 603.6,640.4 611.4,657.0 620.2,668.7 629.0,651.1 637.8,615.0 647.5,597.4 661.2,598.4 672.0,588.6 681.7,603.2 685.6,605.2 695.4,571.0 700.3,563.2 707.1,577.9 715.9,602.3 720.8,608.1 725.7,603.2 733.5,577.9 742.3,552.5 749.1,544.1 754.0,544.6 758.9,551.5 768.6,568.0 773.5,571.0 781.3,569.1 787.2,574.0 793.9,584.3 797.8,584.3 803.7,573.0 811.5,561.3 822.2,570.0 827.1,576.9 834.9,614.0 841.8,657.0 846.6,667.1 856.4,662.4 861.3,662.4 867.1,657.3 875.9,654.0 881.8,658.9 884.7,659.3 889.6,647.2 898.4,581.8 905.2,563.6 909.1,563.6 914.0,575.9 918.9,580.4 929.6,572.6 934.5,572.6 938.4,588.2 948.2,600.7 953.1,582.7 963.8,555.4 968.7,558.3 975.5,592.5 982.4,631.6 988.2,652.1 993.1,659.3 1001.9,650.7 1011.7,627.7 1016.6,625.3 1026.3,627.3 1032.2,624.1 1036.5,616.3" fill="none" stroke="#f03a3a" stroke-width="1"/></g><path d="M1080.5 149V681" stroke="#777" stroke-width="1" stroke-dasharray="4 4"/><path d="M1286.5 149V681.5M57 681.5H1287M57 528.5H1343" stroke="#555" stroke-width="1"/><path d="M1287 160.5H1291M1287 212.5H1291M1287 266H1291M1287 319.5H1291M1287 373.5H1291M1287 415H1291M1287 448H1291M1287 476H1291M1287 509H1291M1287 545H1291M1287 576.5H1291M1287 640.5H1291M1287 672H1291" stroke="#555"/><path d="M60.5 681V685M147.5 681V685M235.5 681V685M322.5 681V685M409.5 681V685M497.5 681V685M585.5 681V685M672.5 681V685M755.5 681V685M846.5 681V685M964.5 681V685M1138.5 681V685M1226.5 681V685" stroke="#555"/></svg><div class="pl" style="top:154.0px">1800.00</div><div class="pl" style="top:206.0px">1780.00</div><div class="pl" style="top:259.5px">1760.00</div><div class="pl" style="top:313.0px">1740.00</div><div class="pl" style="top:367.0px">1720.00</div><div class="pl" style="top:408.5px">1705.00</div><div class="pl" style="top:441.5px">1693.00</div><div class="pl" style="top:469.5px">1683.00</div><div class="pl" style="top:502.5px">1671.00</div><div class="pl" style="top:538.5px">100.0000</div><div class="pl" style="top:570.0px">75.0000</div><div class="pl" style="top:634.0px">25.0000</div><div class="pl" style="top:665.5px">0.0000</div><div class="tag" style="top:185px;background:#0000f0">1787.54</div><div class="tag" style="top:215px;background:#f00000">1776.40</div><div class="tag" style="top:231px;background:#5577dd">1775.99</div><div class="tag" style="top:246.5px;background:#0000f0">1765.26</div><div class="tag" style="top:398px;background:#555555">1708.17</div><div class="tag" style="top:595px;background:#0000f0">54.7894</div><div class="tag" style="top:610.5px;background:#f00000">43.5264</div><div class="dl" style="left:32px;width:60px;text-align:center;font-weight:normal">9</div><div class="dl" style="left:117.5px;width:60px;text-align:center;font-weight:normal">22</div><div class="dl" style="left:205.5px;width:60px;text-align:center;font-weight:normal">27</div><div class="dl" style="left:292.5px;width:60px;text-align:center;font-weight:bold">Jun</div><div class="dl" style="left:379.5px;width:60px;text-align:center;font-weight:normal">4</div><div class="dl" style="left:467.5px;width:60px;text-align:center;font-weight:normal">9</div><div class="dl" style="left:555.5px;width:60px;text-align:center;font-weight:normal">12</div><div class="dl" style="left:642.5px;width:60px;text-align:center;font-weight:normal">17</div><div class="dl" style="left:725.5px;width:60px;text-align:center;font-weight:normal">21</div><div class="dl" style="left:816.5px;width:60px;text-align:center;font-weight:normal">25</div><div class="dl" style="left:934.5px;width:60px;text-align:center;font-weight:bold">Jul</div><div class="dl" style="left:1111px;width:60px;text-align:center;font-weight:normal">9</div><div class="dl" style="left:1196.5px;width:60px;text-align:center;font-weight:normal">14</div><div class="a" style="left:1025px;top:683px;width:110px;height:17px;background:#555;color:#fff;font-size:10.9px;font-weight:bold;line-height:17px;text-align:center">2020-07-07 00:00:00</div><div class="a" style="left:63px;top:162px;width:13px;height:13px;border:1px solid #555"></div><div class="a" style="left:66px;top:168px;width:7px;height:1px;background:#555"></div><div class="a" style="left:82px;top:160px;font-size:15.5px;color:#404040;line-height:18px;white-space:nowrap;transform:scaleX(1.033);transform-origin:0 0">XAU/USD, 240,</div><svg class="a" style="left:199px;top:167px" width="8" height="5"><path d="M0 0H8L4 4.5Z" fill="#ccc"/></svg><div class="a" style="left:217px;top:162px;width:14px;height:14px;background:#dcdcdc"></div><svg class="a" style="left:217px;top:162px" width="14" height="14"><circle cx="7.0" cy="7.0" r="4.3" fill="none" stroke="#fff" stroke-width="1.6"/><circle cx="7.0" cy="7.0" r="1.6" fill="#fff"/></svg><div class="a" style="left:234px;top:162px;width:14px;height:14px;background:#dcdcdc"></div><svg class="a" style="left:235px;top:163px" width="12" height="12" viewBox="0 0 24 24"><path fill="#fff" d="M19.4 13a7.5 7.5 0 0 0 0-2l2.1-1.6-2-3.5-2.5 1a7.4 7.4 0 0 0-1.7-1L14.9 3h-4l-.4 2.9a7.4 7.4 0 0 0-1.7 1l-2.5-1-2 3.5L6.4 11a7.5 7.5 0 0 0 0 2l-2.1 1.6 2 3.5 2.5-1a7.4 7.4 0 0 0 1.7 1l.4 2.9h4l.4-2.9a7.4 7.4 0 0 0 1.7-1l2.5 1 2-3.5zM12.9 15.5a3.5 3.5 0 1 1 0-7 3.5 3.5 0 0 1 0 7z"/></svg><div class="a" style="left:256px;top:161px;font-size:14px;line-height:17px;white-space:nowrap;color:#555">O<span style="color:#2a6a45;margin-left:1px">1775.30</span>&nbsp;&nbsp; H<span style="color:#2a6a45;margin-left:1px">1776.28</span>&nbsp;&nbsp; L<span style="color:#2a6a45;margin-left:1px">1774.46</span>&nbsp;&nbsp; C<span style="color:#2a6a45;margin-left:1px">1775.99</span></div><div class="a" style="left:63px;top:183px;font-size:12px;color:#cfcfcf;line-height:14px;white-space:nowrap;transform:scaleX(0.86);transform-origin:0 0">AEM, NYSE</div><svg class="a" style="left:124px;top:188px" width="8" height="5"><path d="M0 0H8L4 4.5Z" fill="#ccc"/></svg><div class="a" style="left:142px;top:183px;width:14px;height:14px;background:#3ba3e0"></div><svg class="a" style="left:142px;top:183px" width="14" height="14"><circle cx="7.0" cy="7.0" r="4.3" fill="none" stroke="#fff" stroke-width="1.6"/><circle cx="7.0" cy="7.0" r="1.6" fill="#fff"/></svg><div class="a" style="left:159px;top:183px;width:14px;height:14px;background:#dcdcdc"></div><svg class="a" style="left:160px;top:184px" width="12" height="12" viewBox="0 0 24 24"><path fill="#fff" d="M19.4 13a7.5 7.5 0 0 0 0-2l2.1-1.6-2-3.5-2.5 1a7.4 7.4 0 0 0-1.7-1L14.9 3h-4l-.4 2.9a7.4 7.4 0 0 0-1.7 1l-2.5-1-2 3.5L6.4 11a7.5 7.5 0 0 0 0 2l-2.1 1.6 2 3.5 2.5-1a7.4 7.4 0 0 0 1.7 1l.4 2.9h4l.4-2.9a7.4 7.4 0 0 0 1.7-1l2.5 1 2-3.5zM12.9 15.5a3.5 3.5 0 1 1 0-7 3.5 3.5 0 0 1 0 7z"/></svg><div class="a" style="left:176px;top:183px;width:14px;height:14px;background:#dcdcdc"></div><svg class="a" style="left:176px;top:183px" width="14" height="14"><path d="M2.5 2.5L11.5 11.5M11.5 2.5L2.5 11.5" stroke="#fff" stroke-width="1.6"/></svg><div class="a" style="left:198px;top:183px;font-size:12px;color:#d2d2d2;line-height:14px;white-space:nowrap;transform:scaleX(0.96);transform-origin:0 0"><span>63.33</span><span style="position:absolute;left:41px">63.79</span><span style="position:absolute;left:82px">62.78</span><span style="position:absolute;left:123px">62.83</span></div><div class="a" style="left:63px;top:203px;font-size:12px;color:#4a4a4a;line-height:14px;white-space:nowrap;transform:scaleX(0.97);transform-origin:0 0">BB (20, 2)</div><svg class="a" style="left:120px;top:208px" width="8" height="5"><path d="M0 0H8L4 4.5Z" fill="#ccc"/></svg><div class="a" style="left:138px;top:203px;width:14px;height:14px;background:#dcdcdc"></div><svg class="a" style="left:138px;top:203px" width="14" height="14"><circle cx="7.0" cy="7.0" r="4.3" fill="none" stroke="#fff" stroke-width="1.6"/><circle cx="7.0" cy="7.0" r="1.6" fill="#fff"/></svg><div class="a" style="left:155px;top:203px;width:14px;height:14px;background:#dcdcdc"></div><svg class="a" style="left:156px;top:204px" width="12" height="12" viewBox="0 0 24 24"><path fill="#fff" d="M19.4 13a7.5 7.5 0 0 0 0-2l2.1-1.6-2-3.5-2.5 1a7.4 7.4 0 0 0-1.7-1L14.9 3h-4l-.4 2.9a7.4 7.4 0 0 0-1.7 1l-2.5-1-2 3.5L6.4 11a7.5 7.5 0 0 0 0 2l-2.1 1.6 2 3.5 2.5-1a7.4 7.4 0 0 0 1.7 1l.4 2.9h4l.4-2.9a7.4 7.4 0 0 0 1.7-1l2.5 1 2-3.5zM12.9 15.5a3.5 3.5 0 1 1 0-7 3.5 3.5 0 0 1 0 7z"/></svg><div class="a" style="left:172px;top:203px;width:14px;height:14px;background:#dcdcdc"></div><svg class="a" style="left:172px;top:203px" width="14" height="14"><path d="M2.5 2.5L11.5 11.5M11.5 2.5L2.5 11.5" stroke="#fff" stroke-width="1.6"/></svg><div class="a" style="left:195px;top:203px;font-size:12px;line-height:14px;white-space:nowrap;transform:scaleX(0.943);transform-origin:0 0"><span style="color:#f01010">1776.3970</span><span style="color:#2020f0;position:absolute;left:69px">1787.5368</span><span style="color:#2020f0;position:absolute;left:137px">1765.2572</span></div><div class="a" style="left:63px;top:223px;font-size:12px;color:#4a4a4a;line-height:14px;white-space:nowrap;transform:scaleX(0.9);transform-origin:0 0">RSI (14)</div><svg class="a" style="left:107px;top:229px" width="8" height="5"><path d="M0 0H8L4 4.5Z" fill="#ccc"/></svg><div class="a" style="left:126px;top:224px;width:14px;height:14px;background:#dcdcdc"></div><svg class="a" style="left:126px;top:224px" width="14" height="14"><circle cx="7.0" cy="7.0" r="4.3" fill="none" stroke="#fff" stroke-width="1.6"/><circle cx="7.0" cy="7.0" r="1.6" fill="#fff"/></svg><div class="a" style="left:143px;top:224px;width:14px;height:14px;background:#dcdcdc"></div><svg class="a" style="left:144px;top:225px" width="12" height="12" viewBox="0 0 24 24"><path fill="#fff" d="M19.4 13a7.5 7.5 0 0 0 0-2l2.1-1.6-2-3.5-2.5 1a7.4 7.4 0 0 0-1.7-1L14.9 3h-4l-.4 2.9a7.4 7.4 0 0 0-1.7 1l-2.5-1-2 3.5L6.4 11a7.5 7.5 0 0 0 0 2l-2.1 1.6 2 3.5 2.5-1a7.4 7.4 0 0 0 1.7 1l.4 2.9h4l.4-2.9a7.4 7.4 0 0 0 1.7-1l2.5 1 2-3.5zM12.9 15.5a3.5 3.5 0 1 1 0-7 3.5 3.5 0 0 1 0 7z"/></svg><div class="a" style="left:160px;top:224px;width:14px;height:14px;background:#dcdcdc"></div><svg class="a" style="left:160px;top:224px" width="14" height="14"><path d="M2.5 2.5L11.5 11.5M11.5 2.5L2.5 11.5" stroke="#fff" stroke-width="1.6"/></svg><div class="a" style="left:183px;top:223px;font-size:12px;color:#8a1aa0;line-height:14px;transform:scaleX(0.95);transform-origin:0 0">53.6698</div><div class="a" style="left:63px;top:537px;font-size:12px;color:#4a4a4a;line-height:14px;white-space:nowrap">Stoch RSI (14, 14, 3, 3)</div><svg class="a" style="left:191px;top:542px" width="8" height="5"><path d="M0 0H8L4 4.5Z" fill="#ccc"/></svg><div class="a" style="left:208px;top:537px;width:14px;height:14px;background:#dcdcdc"></div><svg class="a" style="left:208px;top:537px" width="14" height="14"><circle cx="7.0" cy="7.0" r="4.3" fill="none" stroke="#fff" stroke-width="1.6"/><circle cx="7.0" cy="7.0" r="1.6" fill="#fff"/></svg><div class="a" style="left:225px;top:537px;width:14px;height:14px;background:#dcdcdc"></div><svg class="a" style="left:226px;top:538px" width="12" height="12" viewBox="0 0 24 24"><path fill="#fff" d="M19.4 13a7.5 7.5 0 0 0 0-2l2.1-1.6-2-3.5-2.5 1a7.4 7.4 0 0 0-1.7-1L14.9 3h-4l-.4 2.9a7.4 7.4 0 0 0-1.7 1l-2.5-1-2 3.5L6.4 11a7.5 7.5 0 0 0 0 2l-2.1 1.6 2 3.5 2.5-1a7.4 7.4 0 0 0 1.7 1l.4 2.9h4l.4-2.9a7.4 7.4 0 0 0 1.7-1l2.5 1 2-3.5zM12.9 15.5a3.5 3.5 0 1 1 0-7 3.5 3.5 0 0 1 0 7z"/></svg><div class="a" style="left:242px;top:537px;width:14px;height:14px;background:#dcdcdc"></div><svg class="a" style="left:242px;top:537px" width="14" height="14"><path d="M2.5 2.5L11.5 11.5M11.5 2.5L2.5 11.5" stroke="#fff" stroke-width="1.6"/></svg><div class="a" style="left:264px;top:537px;font-size:12px;line-height:14px;white-space:nowrap"><span style="color:#2020f0">54.7894</span><span style="color:#f01010;margin-left:10px">43.5264</span></div><div class="a" style="left:1194px;top:165px;width:6px;height:6px;border-radius:3px;background:#999"></div><div class="a" style="left:1204px;top:161px;font-size:12px;color:#999;line-height:14px;white-space:nowrap">Market Closed</div><div class="a" style="left:1249px;top:177px;width:14px;height:14px;background:#ddd"></div><div class="a" style="left:1266px;top:177px;width:14px;height:14px;background:#ddd"></div><svg class="a" style="left:1249px;top:177px" width="31" height="14"><path d="M7 3V10M4.5 8L7 11L9.5 8M24 3V11M21.5 5L24 2.5L26.5 5M21.5 9L24 11.5L26.5 9" stroke="#fff" stroke-width="1.6" fill="none"/></svg><div class="a" style="left:70px;top:493px;font-size:20.5px;font-weight:bold;color:#111;line-height:22px;letter-spacing:-0.1px;white-space:nowrap;-webkit-text-stroke:0.5px #111">Investing<span style="font-weight:normal;font-size:15.5px;color:#555;letter-spacing:0;-webkit-text-stroke:0">.com</span></div><svg class="a" style="left:0;top:0" width="300" height="520"><path d="M279.8 77.2L285.3 75.9V81.2L279.8 82.3Z" fill="#f7a400"/><path d="M130.8 495.8L135.7 494.9V498.2L130.8 499Z" fill="#ffa800"/></svg><svg class="a" style="left:52px;top:390px" width="6" height="40"><path d="M5 23C2 26 2 31 5 35Z" fill="#c8c8cc"/></svg><div class="a" style="left:1343px;top:399px;width:6px;height:27px;border-top:1px solid #d4d6dc;border-bottom:1px solid #d4d6dc"></div><svg class="a" style="left:1344px;top:408px" width="5" height="8"><path d="M4 0.5V7.5L0.5 4Z" fill="#bbb"/></svg><svg class="a" style="left:66px;top:144px" width="9" height="5"><path d="M0.5 4.5L4.5 0.5L8.5 4.5Z" fill="#c4c4c8"/></svg></body></html>
